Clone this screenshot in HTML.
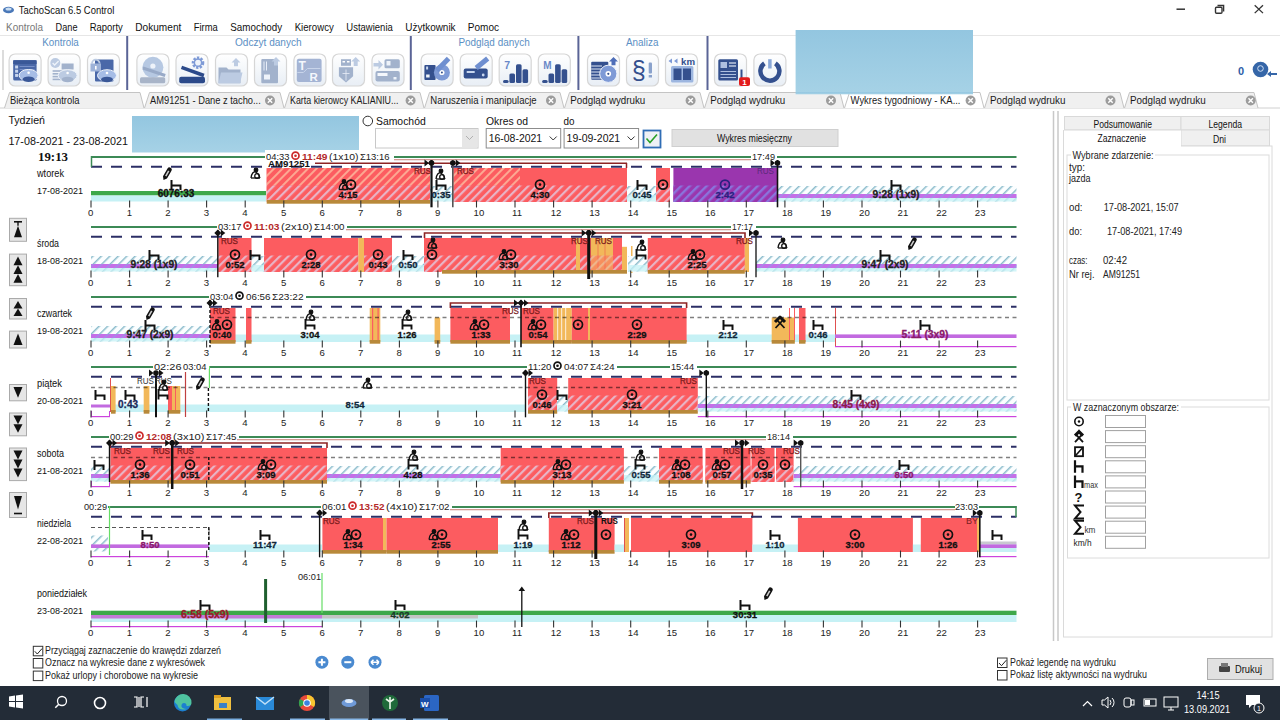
<!DOCTYPE html>
<html><head><meta charset="utf-8"><title>TachoScan</title>
<style>html,body{margin:0;padding:0;background:#fff;overflow:hidden} svg{display:block} text{font-family:"Liberation Sans",sans-serif}</style>
</head><body>
<svg width="1280" height="720" viewBox="0 0 1280 720">
<defs>
<pattern id="hpeach" patternUnits="userSpaceOnUse" width="6" height="6" patternTransform="rotate(45)">
  <rect width="6" height="6" fill="#fc5c60"/><rect x="0" width="2" height="6" fill="#fca892"/></pattern>
<pattern id="hgrey" patternUnits="userSpaceOnUse" width="6" height="6" patternTransform="rotate(45)">
  <rect width="6" height="6" fill="#fc5c60"/><rect x="0" width="2.2" height="6" fill="#e8b4c6"/></pattern>
<pattern id="hpurp" patternUnits="userSpaceOnUse" width="6" height="6" patternTransform="rotate(45)">
  <rect width="6" height="6" fill="#9a36ae"/><rect x="0" width="2.4" height="6" fill="#8a74dc"/></pattern>
<pattern id="hcyan" patternUnits="userSpaceOnUse" width="6" height="6" patternTransform="rotate(45)">
  <rect width="6" height="6" fill="#fbfeff"/><rect x="0" width="1.5" height="6" fill="#8cbccc"/></pattern>
<pattern id="hpbar" patternUnits="userSpaceOnUse" width="6" height="6" patternTransform="rotate(45)">
  <rect width="6" height="6" fill="#c66ee8"/><rect x="0" width="1.6" height="6" fill="#a58ae8"/></pattern>
<linearGradient id="bluerect" x1="0" y1="0" x2="0" y2="1"><stop offset="0" stop-color="#93c6e0"/><stop offset="1" stop-color="#a6d2e6"/></linearGradient>
<linearGradient id="btn" x1="0" y1="0" x2="0" y2="1"><stop offset="0" stop-color="#ffffff"/><stop offset="1" stop-color="#e8eef5"/></linearGradient>
</defs>
<ellipse cx="8.5" cy="10" rx="5.5" ry="3.2" fill="#4a78b8"/><ellipse cx="8.5" cy="9" rx="3" ry="1.5" fill="#c8dcf0"/>
<text x="18.8" y="13.8" font-size="11" fill="#111" textLength="95.5" lengthAdjust="spacingAndGlyphs" >TachoScan 6.5 Control</text>
<line x1="1176.5" y1="9.2" x2="1185.0" y2="9.2" stroke="#333" stroke-width="1.5" />
<rect x="1215.5" y="7.2" width="6.5" height="6.1" fill="none" stroke="#333" stroke-width="1.4" rx="1"/>
<path d="M1217.5 5.5 H1223.6 V11.5" fill="none" stroke="#333" stroke-width="1.4"/>
<line x1="1254.7" y1="5.3" x2="1263.0" y2="13.1" stroke="#333" stroke-width="1.3" />
<line x1="1263.0" y1="5.3" x2="1254.7" y2="13.1" stroke="#333" stroke-width="1.3" />
<text x="6.0" y="30.8" font-size="10.5" fill="#777" textLength="37.0" lengthAdjust="spacingAndGlyphs" >Kontrola</text>
<text x="55.6" y="30.8" font-size="10.5" fill="#111" textLength="21.9" lengthAdjust="spacingAndGlyphs" >Dane</text>
<text x="89.7" y="30.8" font-size="10.5" fill="#111" textLength="33.1" lengthAdjust="spacingAndGlyphs" >Raporty</text>
<text x="135.3" y="30.8" font-size="10.5" fill="#111" textLength="46.0" lengthAdjust="spacingAndGlyphs" >Dokument</text>
<text x="193.8" y="30.8" font-size="10.5" fill="#111" textLength="24.0" lengthAdjust="spacingAndGlyphs" >Firma</text>
<text x="230.3" y="30.8" font-size="10.5" fill="#111" textLength="51.9" lengthAdjust="spacingAndGlyphs" >Samochody</text>
<text x="294.7" y="30.8" font-size="10.5" fill="#111" textLength="39.1" lengthAdjust="spacingAndGlyphs" >Kierowcy</text>
<text x="346.3" y="30.8" font-size="10.5" fill="#111" textLength="46.5" lengthAdjust="spacingAndGlyphs" >Ustawienia</text>
<text x="405.3" y="30.8" font-size="10.5" fill="#111" textLength="50.3" lengthAdjust="spacingAndGlyphs" >Użytkownik</text>
<text x="467.8" y="30.8" font-size="10.5" fill="#111" textLength="31.2" lengthAdjust="spacingAndGlyphs" >Pomoc</text>
<line x1="0.0" y1="35.5" x2="1280.0" y2="35.5" stroke="#e6e6e6" stroke-width="1" />
<rect x="0.0" y="36.0" width="1280.0" height="56.0" fill="#ffffff" />
<text x="42.2" y="45.5" font-size="10.5" fill="#5b8fc4" textLength="36.6" lengthAdjust="spacingAndGlyphs" >Kontrola</text>
<text x="235.0" y="45.5" font-size="10.5" fill="#5b8fc4" textLength="66.6" lengthAdjust="spacingAndGlyphs" >Odczyt danych</text>
<text x="458.4" y="45.5" font-size="10.5" fill="#5b8fc4" textLength="71.3" lengthAdjust="spacingAndGlyphs" >Podgląd danych</text>
<text x="626.0" y="45.5" font-size="10.5" fill="#5b8fc4" textLength="32.4" lengthAdjust="spacingAndGlyphs" >Analiza</text>
<line x1="127.2" y1="36.0" x2="127.2" y2="90.0" stroke="#5a6496" stroke-width="2" />
<line x1="410.8" y1="36.0" x2="410.8" y2="90.0" stroke="#5a6496" stroke-width="2" />
<line x1="578.4" y1="36.0" x2="578.4" y2="90.0" stroke="#5a6496" stroke-width="2" />
<line x1="707.5" y1="36.0" x2="707.5" y2="90.0" stroke="#5a6496" stroke-width="2" />
<line x1="3.0" y1="50.0" x2="3.0" y2="90.0" stroke="#dcdcdc" stroke-width="2" />
<rect x="9.1" y="54.0" width="32" height="32" rx="6" fill="url(#btn)" stroke="#d6d6d6" stroke-width="1.2"/>
<rect x="13.2" y="60.2" width="23.4" height="20.3" fill="#4a68a8" rx="1.5"/>
<rect x="13.2" y="60.2" width="23.4" height="3.8" fill="#3a5898" />
<rect x="15.1" y="65.5" width="3.0" height="3.0" fill="#c8d6ee" />
<rect x="15.1" y="69.7" width="3.0" height="3.0" fill="#c8d6ee" />
<rect x="15.1" y="73.9" width="3.0" height="3.0" fill="#c8d6ee" />
<line x1="19.6" y1="66.5" x2="34.6" y2="66.5" stroke="#7890c8" stroke-width="1" />
<line x1="19.6" y1="69.5" x2="34.6" y2="69.5" stroke="#7890c8" stroke-width="1" />
<ellipse cx="28.6" cy="75.3" rx="9.5" ry="5.8" fill="#a6bde6" stroke="#eef3fa" stroke-width="1"/><ellipse cx="28.6" cy="79.3" rx="6" ry="2.8" fill="#3a5898"/><circle cx="28.6" cy="72.8" r="1.3" fill="#fff"/>
<rect x="48.1" y="54.0" width="32" height="32" rx="6" fill="url(#btn)" stroke="#d6d6d6" stroke-width="1.2"/>
<circle cx="55.300000000000004" cy="63.0" r="5" fill="#bccbe2"/><path d="M52.6 63.0 l2 2 l4 -4" stroke="#eef3fa" stroke-width="1.3" fill="none"/>
<rect x="61.6" y="63.5" width="12.0" height="6.0" fill="#a2b2cc" />
<line x1="52.6" y1="71.0" x2="63.6" y2="71.0" stroke="#a2b2cc" stroke-width="1.6" />
<line x1="52.6" y1="73.8" x2="63.6" y2="73.8" stroke="#a2b2cc" stroke-width="1.6" />
<line x1="52.6" y1="76.6" x2="63.6" y2="76.6" stroke="#a2b2cc" stroke-width="1.6" />
<line x1="52.6" y1="79.4" x2="63.6" y2="79.4" stroke="#a2b2cc" stroke-width="1.6" />
<ellipse cx="67.6" cy="75.5" rx="9.5" ry="5.8" fill="#bccbe2" stroke="#eef3fa" stroke-width="1"/><ellipse cx="67.6" cy="79.5" rx="6" ry="2.8" fill="#a2b2cc"/><circle cx="67.6" cy="73.0" r="1.3" fill="#fff"/>
<rect x="87.5" y="54.0" width="32" height="32" rx="6" fill="url(#btn)" stroke="#d6d6d6" stroke-width="1.2"/>
<rect x="95.0" y="59.5" width="18.5" height="22.0" fill="#4a68a8" rx="1"/>
<path d="M92 63.5 a3.8 3.8 0 0 1 7.6 0" fill="none" stroke="#bccbe2" stroke-width="1.8"/>
<rect x="90.5" y="63.5" width="10.5" height="8.0" fill="#9db2d8" />
<rect x="95.0" y="66.0" width="1.6" height="3.5" fill="#fff" />
<ellipse cx="107.0" cy="75.5" rx="9.5" ry="5.8" fill="#a6bde6" stroke="#eef3fa" stroke-width="1"/><ellipse cx="107.0" cy="79.5" rx="6" ry="2.8" fill="#3a5898"/><circle cx="107.0" cy="73.0" r="1.3" fill="#fff"/>
<rect x="136.9" y="54.0" width="32" height="32" rx="6" fill="url(#btn)" stroke="#d6d6d6" stroke-width="1.2"/>
<circle cx="152.9" cy="67.3" r="10.5" fill="#b6c8e2"/><circle cx="152.9" cy="66.0" r="2.6" fill="#eef3fa"/>
<line x1="142.9" y1="68.0" x2="165.2" y2="75.5" stroke="#98aac8" stroke-width="3" />
<rect x="140.0" y="77.3" width="25.2" height="5.9" fill="#a8b4c8" rx="1.5"/>
<rect x="176.0" y="54.0" width="32" height="32" rx="6" fill="url(#btn)" stroke="#d6d6d6" stroke-width="1.2"/>
<circle cx="198.0" cy="62.7" r="4.8" fill="#eef3fa" stroke="#7e9ad6" stroke-width="3" stroke-dasharray="2.2 1.3"/><circle cx="198.0" cy="62.7" r="3.6" fill="none" stroke="#7e9ad6" stroke-width="1.5"/>
<line x1="181.5" y1="67.3" x2="203.9" y2="75.5" stroke="#2c4a8a" stroke-width="3.5" />
<rect x="179.2" y="76.7" width="25.8" height="6.5" fill="#2c4a8a" rx="2"/>
<rect x="215.5" y="54.0" width="32" height="32" rx="6" fill="url(#btn)" stroke="#d6d6d6" stroke-width="1.2"/>
<path d="M231.5 62.5 L236.0 58.0 L240.5 62.5 H238.0 V66.2 H234.0 V62.5z" fill="#bccbe2"/>
<path d="M218.5 67.5 h8 l2 2 h12 v13.7 h-22z" fill="#a2b2cc"/><path d="M221 72.5 h21.5 l-2.5 10.7 h-21.5z" fill="#bccbe2"/>
<rect x="254.5" y="54.0" width="32" height="32" rx="6" fill="url(#btn)" stroke="#d6d6d6" stroke-width="1.2"/>
<rect x="261.3" y="59.1" width="16.7" height="24.1" fill="#a2b2cc" rx="1"/>
<line x1="264.0" y1="61.5" x2="264.0" y2="70.5" stroke="#e8eef8" stroke-width="1" />
<line x1="266.5" y1="61.5" x2="266.5" y2="70.5" stroke="#e8eef8" stroke-width="1" />
<rect x="264.0" y="74.5" width="6.0" height="5.0" fill="#eef3fa" />
<path d="M271.5 61.5 L276.0 57.0 L280.5 61.5 H278.0 V65.5 H274.0 V61.5z" fill="#bccbe2"/>
<rect x="293.9" y="54.0" width="32" height="32" rx="6" fill="url(#btn)" stroke="#d6d6d6" stroke-width="1.2"/>
<rect x="296.8" y="58.7" width="24.8" height="23.3" fill="#a4b4d4" rx="2"/>
<path d="M297.4 72.5 h6 l4 -4 h13" fill="none" stroke="#c8d4ea" stroke-width="1"/>
<text x="298.4" y="70.0" font-size="12" fill="#f4f7fc" font-weight="bold" >T</text>
<text x="309.4" y="80.5" font-size="11.5" fill="#f4f7fc" font-weight="bold" >R</text>
<rect x="332.5" y="54.0" width="32" height="32" rx="6" fill="url(#btn)" stroke="#d6d6d6" stroke-width="1.2"/>
<rect x="341.0" y="59.2" width="10.0" height="6.6" fill="#a2b2cc" />
<rect x="342.5" y="61.0" width="2.5" height="1.5" fill="#fff" />
<rect x="347.0" y="61.0" width="2.5" height="1.5" fill="#fff" />
<path d="M351.2 61.5 L355.7 57.0 L360.2 61.5 H357.7 V66.0 H353.7 V61.5z" fill="#bccbe2"/>
<path d="M338.9 67.3 h14.2 v9 l-7.1 6.2 l-7.1 -6.2z" fill="#a2b2cc"/><path d="M346 69.5 v11 M342.5 73.5 h7" stroke="#e8eef8" stroke-width="0.8"/>
<rect x="372.0" y="54.0" width="32" height="32" rx="6" fill="url(#btn)" stroke="#d6d6d6" stroke-width="1.2"/>
<path d="M373.5 63.0 h5 v-3 l4.5 4.8 l-4.5 4.8 v-3 h-5z" fill="#bccbe2"/>
<rect x="384.5" y="59.2" width="15.3" height="9.1" fill="#a2b2cc" rx="1.5"/>
<rect x="386.5" y="61.0" width="4.0" height="4.5" fill="#eef3fa" />
<rect x="375.5" y="70.9" width="24.3" height="10.6" fill="#a2b2cc" rx="2"/>
<rect x="377.5" y="73.0" width="10.0" height="3.0" fill="#f4f7fc" />
<rect x="393.5" y="77.0" width="3.0" height="2.5" fill="#eef3fa" />
<rect x="421.1" y="54.0" width="32" height="32" rx="6" fill="url(#btn)" stroke="#d6d6d6" stroke-width="1.2"/>
<rect x="424.4" y="64.9" width="11.2" height="15.0" fill="#34508e" rx="1"/>
<rect x="426.1" y="66.5" width="2.0" height="3.0" fill="#c8d6ee" />
<rect x="426.1" y="74.5" width="3.5" height="3.0" fill="#eef3fa" />
<circle cx="441.90000000000003" cy="72.5" r="8" fill="#7e9ad6"/><circle cx="441.90000000000003" cy="72.5" r="2.6" fill="#fff"/><circle cx="441.90000000000003" cy="72.5" r="1" fill="#34508e"/>
<line x1="436.9" y1="70.5" x2="448.6" y2="58.5" stroke="#6f8fd0" stroke-width="5" />
<rect x="460.2" y="54.0" width="32" height="32" rx="6" fill="url(#btn)" stroke="#d6d6d6" stroke-width="1.2"/>
<rect x="463.7" y="68.5" width="24.0" height="10.0" fill="#34508e" rx="2"/>
<rect x="466.7" y="71.0" width="8.0" height="2.0" fill="#c8d6ee" />
<circle cx="483.2" cy="75.0" r="1.4" fill="#c8d6ee"/>
<line x1="476.2" y1="68.0" x2="487.7" y2="58.5" stroke="#6f8fd0" stroke-width="5" />
<rect x="499.2" y="54.0" width="32" height="32" rx="6" fill="url(#btn)" stroke="#d6d6d6" stroke-width="1.2"/>
<text x="504.2" y="68.5" font-size="10.5" fill="#6a88c8" font-weight="bold" >7</text>
<rect x="503.0" y="79.9" width="5.6" height="3.1" fill="#34508e" rx="1.5"/>
<rect x="509.4" y="73.5" width="5.6" height="9.5" fill="#34508e" rx="1.5"/>
<rect x="516.0" y="64.3" width="5.6" height="18.7" fill="#34508e" rx="1.5"/>
<rect x="522.5" y="69.3" width="5.6" height="13.7" fill="#34508e" rx="1.5"/>
<rect x="538.3" y="54.0" width="32" height="32" rx="6" fill="url(#btn)" stroke="#d6d6d6" stroke-width="1.2"/>
<text x="543.3" y="68.5" font-size="10" fill="#6a88c8" font-weight="bold" >M</text>
<rect x="542.1" y="79.9" width="5.6" height="3.1" fill="#34508e" rx="1.5"/>
<rect x="548.5" y="73.5" width="5.6" height="9.5" fill="#34508e" rx="1.5"/>
<rect x="555.1" y="64.3" width="5.6" height="18.7" fill="#34508e" rx="1.5"/>
<rect x="561.6" y="69.3" width="5.6" height="13.7" fill="#34508e" rx="1.5"/>
<rect x="587.5" y="54.0" width="32" height="32" rx="6" fill="url(#btn)" stroke="#d6d6d6" stroke-width="1.2"/>
<rect x="591.2" y="61.7" width="17.1" height="18.1" fill="#34508e" rx="1"/>
<line x1="591.2" y1="66.0" x2="602.0" y2="66.0" stroke="#dfe7f4" stroke-width="1" />
<line x1="591.2" y1="69.0" x2="602.0" y2="69.0" stroke="#dfe7f4" stroke-width="1" />
<line x1="591.2" y1="72.0" x2="602.0" y2="72.0" stroke="#dfe7f4" stroke-width="1" />
<line x1="591.2" y1="75.0" x2="602.0" y2="75.0" stroke="#dfe7f4" stroke-width="1" />
<line x1="591.2" y1="78.0" x2="602.0" y2="78.0" stroke="#dfe7f4" stroke-width="1" />
<circle cx="608.3" cy="73.8" r="8.6" fill="#7e9ad6" stroke="#eef3fa" stroke-width="1"/><circle cx="608.3" cy="73.8" r="2.8" fill="#fff"/><circle cx="608.3" cy="73.8" r="1.1" fill="#34508e"/>
<path d="M609.0 61.5 L613.5 57.0 L618.0 61.5 H615.5 V65.2 H611.5 V61.5z" fill="#4e6eb8"/>
<rect x="626.5" y="54.0" width="32" height="32" rx="6" fill="url(#btn)" stroke="#d6d6d6" stroke-width="1.2"/>
<text x="631.8" y="79.3" font-size="25" fill="#34508e" textLength="14.0" lengthAdjust="spacingAndGlyphs" >§</text>
<rect x="648.7" y="62.5" width="3.3" height="11.0" fill="#8aa2cc" rx="1"/>
<rect x="648.7" y="75.0" width="3.3" height="2.5" fill="#8aa2cc" />
<rect x="665.5" y="54.0" width="32" height="32" rx="6" fill="url(#btn)" stroke="#d6d6d6" stroke-width="1.2"/>
<text x="681.0" y="64.7" font-size="9.5" fill="#34508e" font-weight="bold" textLength="14.0" lengthAdjust="spacingAndGlyphs" >km</text>
<path d="M668.5 60.9 l3.5 -2.5 v5z M674 60.9 l3.5 -2.5 v5z" fill="#7e9ad6"/>
<rect x="671.0" y="66.0" width="22.4" height="16.5" fill="#9db6e0" rx="1.5"/>
<rect x="673.5" y="68.5" width="8.0" height="11.5" fill="#34508e" />
<rect x="683.0" y="68.5" width="8.0" height="11.5" fill="#34508e" />
<rect x="714.5" y="54.0" width="32" height="32" rx="6" fill="url(#btn)" stroke="#d6d6d6" stroke-width="1.2"/>
<rect x="718.3" y="59.2" width="19.7" height="21.4" fill="#34508e" rx="1.5"/>
<rect x="720.5" y="62.0" width="6.5" height="6.0" fill="#aebfe0" />
<line x1="729.0" y1="63.0" x2="736.0" y2="63.0" stroke="#dfe7f4" stroke-width="1.2" />
<line x1="729.0" y1="66.0" x2="736.0" y2="66.0" stroke="#dfe7f4" stroke-width="1.2" />
<line x1="720.5" y1="71.5" x2="736.0" y2="71.5" stroke="#aebfe0" stroke-width="1" />
<line x1="720.5" y1="74.5" x2="736.0" y2="74.5" stroke="#aebfe0" stroke-width="1" />
<line x1="720.5" y1="77.5" x2="736.0" y2="77.5" stroke="#aebfe0" stroke-width="1" />
<rect x="740.5" y="69.5" width="2.0" height="10.5" fill="#34508e" />
<rect x="739.0" y="77.2" width="11.0" height="8.9" fill="#e21c1c" rx="2"/>
<text x="742.3" y="85.0" font-size="8" fill="#fff" font-weight="bold" >1</text>
<rect x="753.9" y="54.0" width="32" height="32" rx="6" fill="url(#btn)" stroke="#d6d6d6" stroke-width="1.2"/>
<path d="M764.4 63.4 A9.5 9.5 0 1 0 775.4 63.4" fill="none" stroke="#34508e" stroke-width="4.5"/>
<line x1="769.9" y1="59.2" x2="769.9" y2="68.5" stroke="#8aa8d8" stroke-width="3.5" />
<rect x="795.6" y="30.0" width="177.4" height="64.3" fill="url(#bluerect)" />
<text x="1238.0" y="74.5" font-size="11" fill="#2d5ea8" font-weight="bold" >0</text>
<circle cx="1260.5" cy="69.5" r="7.8" fill="#3566a8"/><circle cx="1260.5" cy="68.5" r="2.8" fill="none" stroke="#cfe0f4" stroke-width="1"/><path d="M1270 74 h7" stroke="#3566a8" stroke-width="2"/><path d="M1267 74 l4 -3 v6z" fill="#3566a8"/>
<rect x="0.0" y="92.0" width="1280.0" height="16.5" fill="#ffffff" />
<line x1="0.0" y1="108.0" x2="1280.0" y2="108.0" stroke="#d0d0d0" stroke-width="1" />
<path d="M4.5 108 L9.5 92.5 H140 L144 108" fill="#f0f0f0" stroke="#c4c4c4" stroke-width="1"/>
<path d="M144.5 108 L149.5 92.5 H280 L284 108" fill="#f0f0f0" stroke="#c4c4c4" stroke-width="1"/>
<path d="M284.5 108 L289.5 92.5 H420 L424 108" fill="#f0f0f0" stroke="#c4c4c4" stroke-width="1"/>
<path d="M424.5 108 L429.5 92.5 H560 L564 108" fill="#f0f0f0" stroke="#c4c4c4" stroke-width="1"/>
<path d="M564.5 108 L569.5 92.5 H700 L704 108" fill="#f0f0f0" stroke="#c4c4c4" stroke-width="1"/>
<path d="M704.5 108 L709.5 92.5 H840 L844 108" fill="#f0f0f0" stroke="#c4c4c4" stroke-width="1"/>
<path d="M844.5 108 L849.5 92.5 H980 L984 108" fill="#ffffff" stroke="#c4c4c4" stroke-width="1"/>
<path d="M984.5 108 L989.5 92.5 H1120 L1124 108" fill="#f0f0f0" stroke="#c4c4c4" stroke-width="1"/>
<path d="M1124.5 108 L1129.5 92.5 H1254 L1258 108" fill="#f0f0f0" stroke="#c4c4c4" stroke-width="1"/>
<text x="10.0" y="104.0" font-size="10.5" fill="#1a1a1a" textLength="69.5" lengthAdjust="spacingAndGlyphs" >Bieżąca kontrola</text>
<text x="150.0" y="104.0" font-size="10.5" fill="#1a1a1a" textLength="110.8" lengthAdjust="spacingAndGlyphs" >AM91251 - Dane z tacho...</text>
<circle cx="270" cy="100.5" r="5" fill="#9c9c9c"/><path d="M267.8 98.3 l4.4 4.4 M272.2 98.3 l-4.4 4.4" stroke="#fff" stroke-width="1.4"/>
<text x="290.0" y="104.0" font-size="10.5" fill="#1a1a1a" textLength="108.4" lengthAdjust="spacingAndGlyphs" >Karta kierowcy KALIANIU...</text>
<circle cx="410.6" cy="100.5" r="5" fill="#9c9c9c"/><path d="M408.40000000000003 98.3 l4.4 4.4 M412.8 98.3 l-4.4 4.4" stroke="#fff" stroke-width="1.4"/>
<text x="430.3" y="104.0" font-size="10.5" fill="#1a1a1a" textLength="106.3" lengthAdjust="spacingAndGlyphs" >Naruszenia i manipulacje</text>
<circle cx="551" cy="100.5" r="5" fill="#9c9c9c"/><path d="M548.8 98.3 l4.4 4.4 M553.2 98.3 l-4.4 4.4" stroke="#fff" stroke-width="1.4"/>
<text x="570.3" y="104.0" font-size="10.5" fill="#1a1a1a" textLength="75.0" lengthAdjust="spacingAndGlyphs" >Podgląd wydruku</text>
<circle cx="690.6" cy="100.5" r="5" fill="#9c9c9c"/><path d="M688.4 98.3 l4.4 4.4 M692.8000000000001 98.3 l-4.4 4.4" stroke="#fff" stroke-width="1.4"/>
<text x="710.3" y="104.0" font-size="10.5" fill="#1a1a1a" textLength="75.0" lengthAdjust="spacingAndGlyphs" >Podgląd wydruku</text>
<circle cx="831" cy="100.5" r="5" fill="#9c9c9c"/><path d="M828.8 98.3 l4.4 4.4 M833.2 98.3 l-4.4 4.4" stroke="#fff" stroke-width="1.4"/>
<text x="850.6" y="104.0" font-size="10.5" fill="#1a1a1a" textLength="109.9" lengthAdjust="spacingAndGlyphs" >Wykres tygodniowy - KA...</text>
<circle cx="970.6" cy="100.5" r="5" fill="#9c9c9c"/><path d="M968.4 98.3 l4.4 4.4 M972.8000000000001 98.3 l-4.4 4.4" stroke="#fff" stroke-width="1.4"/>
<text x="990.0" y="104.0" font-size="10.5" fill="#1a1a1a" textLength="75.5" lengthAdjust="spacingAndGlyphs" >Podgląd wydruku</text>
<circle cx="1110.5" cy="100.5" r="5" fill="#9c9c9c"/><path d="M1108.3 98.3 l4.4 4.4 M1112.7 98.3 l-4.4 4.4" stroke="#fff" stroke-width="1.4"/>
<text x="1130.0" y="104.0" font-size="10.5" fill="#1a1a1a" textLength="75.7" lengthAdjust="spacingAndGlyphs" >Podgląd wydruku</text>
<circle cx="1250.7" cy="100.5" r="5" fill="#9c9c9c"/><path d="M1248.5 98.3 l4.4 4.4 M1252.9 98.3 l-4.4 4.4" stroke="#fff" stroke-width="1.4"/>
<rect x="795.6" y="92.0" width="177.4" height="2.3" fill="url(#bluerect)" />
<text x="8.4" y="124.3" font-size="10.8" fill="#111" textLength="36.6" lengthAdjust="spacingAndGlyphs" >Tydzień</text>
<text x="8.4" y="144.5" font-size="10.8" fill="#111" textLength="119.6" lengthAdjust="spacingAndGlyphs" >17-08-2021 - 23-08-2021</text>
<rect x="132.0" y="116.0" width="227.0" height="36.5" fill="url(#bluerect)" />
<circle cx="367.8" cy="121" r="4.8" fill="#fff" stroke="#333" stroke-width="1"/>
<text x="376.0" y="125.0" font-size="10.8" fill="#111" textLength="49.7" lengthAdjust="spacingAndGlyphs" >Samochód</text>
<rect x="375.5" y="128.5" width="102.5" height="19.5" fill="#fff" stroke="#c8c8c8" stroke-width="1"/>
<rect x="462.0" y="129.0" width="15.5" height="18.5" fill="#e6e6e6" />
<path d="M466 136 l3.5 3.5 l3.5 -3.5" fill="none" stroke="#b0b0b0" stroke-width="1"/>
<text x="486.0" y="125.0" font-size="10.8" fill="#111" textLength="42.0" lengthAdjust="spacingAndGlyphs" >Okres od</text>
<text x="563.6" y="125.0" font-size="10.8" fill="#111" textLength="11.0" lengthAdjust="spacingAndGlyphs" >do</text>
<rect x="486.2" y="128.5" width="74.5" height="19.5" fill="#fff" stroke="#8c8c8c" stroke-width="1"/>
<text x="488.7" y="142.3" font-size="10.8" fill="#111" textLength="53.5" lengthAdjust="spacingAndGlyphs" >16-08-2021</text>
<path d="M549.7 136.5 l3.5 3.5 l3.5 -3.5" fill="none" stroke="#333" stroke-width="1"/>
<rect x="564.1" y="128.5" width="74.5" height="19.5" fill="#fff" stroke="#8c8c8c" stroke-width="1"/>
<text x="566.6" y="142.3" font-size="10.8" fill="#111" textLength="53.5" lengthAdjust="spacingAndGlyphs" >19-09-2021</text>
<path d="M627.6 136.5 l3.5 3.5 l3.5 -3.5" fill="none" stroke="#333" stroke-width="1"/>
<rect x="643.5" y="130.5" width="17.0" height="17.0" fill="#eef1f5" stroke="#2f6db5" stroke-width="1.8"/>
<path d="M646.5 138.5 l3.5 4 l7 -8" fill="none" stroke="#28a028" stroke-width="1.6"/>
<rect x="672.0" y="129.5" width="166.0" height="17.0" fill="#e1e1e1" stroke="#cfcfcf" stroke-width="1"/>
<text x="717.0" y="141.5" font-size="10.5" fill="#111" textLength="75.0" lengthAdjust="spacingAndGlyphs" >Wykres miesięczny</text>
<line x1="1053.5" y1="111.0" x2="1053.5" y2="641.0" stroke="#c8c8c8" stroke-width="1.5" />
<line x1="1058.0" y1="111.0" x2="1058.0" y2="641.0" stroke="#c8c8c8" stroke-width="1.5" />
<rect x="1064.5" y="116.5" width="116.5" height="13.5" fill="#f0f0f0" stroke="#d9d9d9" stroke-width="1"/>
<rect x="1181.0" y="116.5" width="88.5" height="13.5" fill="#f0f0f0" stroke="#d9d9d9" stroke-width="1"/>
<rect x="1181.0" y="130.0" width="88.5" height="16.0" fill="#f0f0f0" stroke="#d9d9d9" stroke-width="1"/>
<rect x="1063.5" y="146.0" width="208.5" height="491.0" fill="#ffffff" stroke="#dadada" stroke-width="1"/>
<rect x="1064.0" y="130.0" width="117.0" height="17.0" fill="#ffffff" />
<line x1="1063.5" y1="130.0" x2="1063.5" y2="146.0" stroke="#dadada" stroke-width="1" />
<line x1="1064.0" y1="130.0" x2="1181.0" y2="130.0" stroke="#dadada" stroke-width="1" />
<text x="1093.5" y="127.5" font-size="10" fill="#111" textLength="58.5" lengthAdjust="spacingAndGlyphs" >Podsumowanie</text>
<text x="1208.5" y="127.5" font-size="10" fill="#111" textLength="33.5" lengthAdjust="spacingAndGlyphs" >Legenda</text>
<text x="1097.5" y="141.5" font-size="10" fill="#111" textLength="48.5" lengthAdjust="spacingAndGlyphs" >Zaznaczenie</text>
<text x="1213.0" y="143.0" font-size="10" fill="#111" textLength="13.0" lengthAdjust="spacingAndGlyphs" >Dni</text>
<rect x="1067.0" y="155.0" width="202.0" height="245.0" fill="none" stroke="#dcdcdc" stroke-width="1"/>
<rect x="1071.0" y="150.0" width="84.0" height="8.0" fill="#fff" />
<text x="1072.5" y="158.5" font-size="10" fill="#222" textLength="81.0" lengthAdjust="spacingAndGlyphs" >Wybrane zdarzenie:</text>
<text x="1069.0" y="170.5" font-size="10" fill="#222" textLength="16.0" lengthAdjust="spacingAndGlyphs" >typ:</text>
<text x="1069.0" y="181.5" font-size="10" fill="#222" textLength="21.5" lengthAdjust="spacingAndGlyphs" >jazda</text>
<text x="1069.0" y="210.5" font-size="10" fill="#222" textLength="13.5" lengthAdjust="spacingAndGlyphs" >od:</text>
<text x="1069.0" y="235.0" font-size="10" fill="#222" textLength="13.0" lengthAdjust="spacingAndGlyphs" >do:</text>
<text x="1069.0" y="263.5" font-size="10" fill="#222" textLength="18.5" lengthAdjust="spacingAndGlyphs" >czas:</text>
<text x="1069.0" y="278.4" font-size="10" fill="#222" textLength="25.5" lengthAdjust="spacingAndGlyphs" >Nr rej.</text>
<text x="1103.7" y="210.5" font-size="10" fill="#222" textLength="75.0" lengthAdjust="spacingAndGlyphs" >17-08-2021, 15:07</text>
<text x="1107.0" y="235.0" font-size="10" fill="#222" textLength="75.0" lengthAdjust="spacingAndGlyphs" >17-08-2021, 17:49</text>
<text x="1103.0" y="263.5" font-size="10" fill="#222" textLength="24.0" lengthAdjust="spacingAndGlyphs" >02:42</text>
<text x="1103.0" y="278.4" font-size="10" fill="#222" textLength="37.0" lengthAdjust="spacingAndGlyphs" >AM91251</text>
<rect x="1067.5" y="407.0" width="201.5" height="151.0" fill="none" stroke="#dcdcdc" stroke-width="1"/>
<rect x="1071.0" y="403.0" width="110.0" height="7.0" fill="#fff" />
<text x="1073.0" y="410.8" font-size="10" fill="#222" textLength="106.0" lengthAdjust="spacingAndGlyphs" >W zaznaczonym obszarze:</text>
<rect x="1105.5" y="415.5" width="40.0" height="12.0" fill="#fff" stroke="#a0a0a0" stroke-width="1"/>
<rect x="1105.5" y="430.6" width="40.0" height="12.0" fill="#fff" stroke="#a0a0a0" stroke-width="1"/>
<rect x="1105.5" y="445.7" width="40.0" height="12.0" fill="#fff" stroke="#a0a0a0" stroke-width="1"/>
<rect x="1105.5" y="460.8" width="40.0" height="12.0" fill="#fff" stroke="#a0a0a0" stroke-width="1"/>
<rect x="1105.5" y="475.9" width="40.0" height="12.0" fill="#fff" stroke="#a0a0a0" stroke-width="1"/>
<rect x="1105.5" y="491.0" width="40.0" height="12.0" fill="#fff" stroke="#a0a0a0" stroke-width="1"/>
<rect x="1105.5" y="506.1" width="40.0" height="12.0" fill="#fff" stroke="#a0a0a0" stroke-width="1"/>
<rect x="1105.5" y="521.2" width="40.0" height="12.0" fill="#fff" stroke="#a0a0a0" stroke-width="1"/>
<rect x="1105.5" y="536.3" width="40.0" height="12.0" fill="#fff" stroke="#a0a0a0" stroke-width="1"/>
<circle cx="1079" cy="421.5" r="4.2" fill="none" stroke="#111" stroke-width="1.6"/><circle cx="1079" cy="421.5" r="1.2" fill="#111"/>
<path d="M1075 442.1 L1082 434.6 M1083 442.1 L1076 434.6" stroke="#111" stroke-width="1.8"/><path d="M1075 435.6 l5 -5 M1083 435.6 l-5 -5" stroke="#111" stroke-width="3"/>
<rect x="1075.0" y="447.2" width="8.0" height="9.0" fill="none" stroke="#111" stroke-width="1.8"/>
<line x1="1075.0" y1="456.2" x2="1083.0" y2="447.2" stroke="#111" stroke-width="1.6" />
<path d="M1075 460.3 V472.8 M1075 466.3 H1082.5 V472.8" fill="none" stroke="#111" stroke-width="2.2"/>
<path d="M1075 475.4 V487.9 M1075 481.4 H1082.5 V487.9" fill="none" stroke="#111" stroke-width="2.2"/>
<text x="1084.0" y="487.9" font-size="8.5" fill="#333" textLength="14.0" lengthAdjust="spacingAndGlyphs" >max</text>
<text x="1074.5" y="502.0" font-size="13" fill="#111" font-weight="bold" >?</text>
<path d="M1084 505.6 H1075 L1080.5 512.1 L1075 518.6 H1084" fill="none" stroke="#111" stroke-width="2"/>
<path d="M1084 520.7 H1075 L1080.5 527.2 L1075 533.7 H1084" fill="none" stroke="#111" stroke-width="2"/>
<text x="1084.5" y="533.2" font-size="8.5" fill="#333" textLength="11.0" lengthAdjust="spacingAndGlyphs" >km</text>
<text x="1073.5" y="546.3" font-size="8.5" fill="#222" textLength="18.0" lengthAdjust="spacingAndGlyphs" >km/h</text>
<rect x="33.3" y="646.3" width="9.5" height="9.5" fill="#fff" stroke="#333" stroke-width="1"/>
<path d="M34.8 651.3 l2.5 2.7 l4.8 -5.5" fill="none" stroke="#222" stroke-width="1"/>
<text x="45.0" y="653.8" font-size="10" fill="#222" textLength="176.0" lengthAdjust="spacingAndGlyphs" >Przyciągaj zaznaczenie do krawędzi zdarzeń</text>
<rect x="33.3" y="658.5" width="9.5" height="9.5" fill="#fff" stroke="#333" stroke-width="1"/>
<text x="45.0" y="666.2" font-size="10" fill="#222" textLength="160.0" lengthAdjust="spacingAndGlyphs" >Oznacz na wykresie dane z wykresówek</text>
<rect x="33.3" y="671.1" width="9.5" height="9.5" fill="#fff" stroke="#333" stroke-width="1"/>
<text x="45.0" y="678.5" font-size="10" fill="#222" textLength="153.0" lengthAdjust="spacingAndGlyphs" >Pokaż urlopy i chorobowe na wykresie</text>
<circle cx="321.9" cy="662.2" r="6.5" fill="#4a8ad0"/>
<path d="M318.4 662.2 h7 M321.9 658.7 v7" stroke="#fff" stroke-width="2"/>
<circle cx="347.8" cy="662.2" r="6.5" fill="#4a8ad0"/>
<path d="M344.3 662.2 h7" stroke="#fff" stroke-width="2"/>
<circle cx="375" cy="662.2" r="6.5" fill="#4a8ad0"/>
<path d="M371 662.2 h8 M371 662.2 l2.5 -2.5 M371 662.2 l2.5 2.5 M379 662.2 l-2.5 -2.5 M379 662.2 l-2.5 2.5" stroke="#fff" stroke-width="1.6"/>
<rect x="997.5" y="658.0" width="9.5" height="9.5" fill="#fff" stroke="#333" stroke-width="1"/>
<path d="M999 663.0 l2.5 2.7 l4.8 -5.5" fill="none" stroke="#222" stroke-width="1"/>
<text x="1010.0" y="666.0" font-size="10" fill="#222" textLength="106.0" lengthAdjust="spacingAndGlyphs" >Pokaż legendę na wydruku</text>
<rect x="997.5" y="670.5" width="9.5" height="9.5" fill="#fff" stroke="#333" stroke-width="1"/>
<text x="1010.0" y="678.3" font-size="10" fill="#222" textLength="137.0" lengthAdjust="spacingAndGlyphs" >Pokaż listę aktywności na wydruku</text>
<rect x="1207.5" y="658.5" width="65.5" height="21.0" fill="#e1e1e1" stroke="#adadad" stroke-width="1"/>
<rect x="1219" y="666" width="11" height="6" rx="1" fill="#444"/><rect x="1221" y="663" width="7" height="4" fill="#777"/>
<text x="1235.0" y="673.0" font-size="10" fill="#111" textLength="27.0" lengthAdjust="spacingAndGlyphs" >Drukuj</text>
<rect x="0.0" y="686.0" width="1280.0" height="34.0" fill="#232c37" />
<rect x="329.0" y="686.0" width="40.0" height="34.0" fill="#4a535d" />
<path d="M9 696.5 l6 -0.9 v5.4 h-6z M16 695.4 l7 -1 v6.6 h-7z M9 702 h6 v5.4 l-6 -0.9z M16 702 h7 v6.6 l-7 -1z" fill="#fff"/>
<circle cx="62" cy="701" r="4.5" fill="none" stroke="#fff" stroke-width="1.3"/><path d="M58.8 704.2 l-3.5 3.5" stroke="#fff" stroke-width="1.5"/>
<circle cx="100" cy="703" r="5.5" fill="none" stroke="#fff" stroke-width="1.6"/>
<path d="M134 697 h3 v10 h-3 M144 697 h-3 v10 h3 M139 697 v10 M147 697 v10" fill="none" stroke="#fff" stroke-width="1.2"/>
<circle cx="182.5" cy="703" r="8.5" fill="#1c7fd0"/><path d="M174.5 702 a8.5 8.5 0 0 1 17 1 q0 3 -4 3 h-6 q1 3 5 3 q-8 2 -9 -4z" fill="#4fc3a0"/><circle cx="184" cy="705.5" r="2.5" fill="#1c7fd0"/>
<rect x="214" y="697" width="17" height="13" fill="#f0c040"/><rect x="214" y="695" width="7" height="3" fill="#e0a020"/><rect x="219" y="703" width="8" height="5" fill="#3a80c8"/>
<rect x="256" y="697" width="18" height="13" fill="#2a8ad8"/><path d="M256 697 l9 7 l9 -7" fill="none" stroke="#bfe0f8" stroke-width="1.4"/>
<circle cx="307" cy="703" r="8" fill="#e84a3a"/><path d="M307 695 a8 8 0 0 1 7 12 l-7 -4z" fill="#f8c630"/><path d="M300 707 a8 8 0 0 1 0 -8 l7 4z" fill="#2da44e"/><circle cx="307" cy="703" r="3.8" fill="#fff"/><circle cx="307" cy="703" r="2.8" fill="#3b82e0"/>
<ellipse cx="349" cy="703" rx="7.5" ry="4" fill="#6f9ad8"/><ellipse cx="349" cy="701" rx="4" ry="2" fill="#dbe8f8"/>
<circle cx="390" cy="703" r="8" fill="#1f6a3a"/><path d="M390 697 v12 M386 699 l4 3 l4 -3" stroke="#e8f4e8" stroke-width="1.6" fill="none"/>
<rect x="424" y="695" width="15" height="16" rx="1.5" fill="#2b66c4"/><rect x="420" y="698" width="10" height="10" fill="#1a4ea8"/><text x="421" y="706.5" font-size="8" font-weight="bold" fill="#fff">W</text>
<rect x="207.0" y="718.5" width="35.0" height="1.5" fill="#7aaee0" />
<rect x="290.0" y="718.5" width="35.0" height="1.5" fill="#88b8e8" />
<rect x="330.0" y="718.5" width="38.0" height="1.5" fill="#88b8e8" />
<rect x="372.0" y="718.5" width="34.0" height="1.5" fill="#88b8e8" />
<rect x="413.0" y="718.5" width="35.0" height="1.5" fill="#88b8e8" />
<path d="M1083 706 l4.5 -4.5 l4.5 4.5" fill="none" stroke="#fff" stroke-width="1.2"/>
<path d="M1102 700 h2.5 l3.5 -3 v11 l-3.5 -3 h-2.5z" fill="none" stroke="#fff" stroke-width="1"/><path d="M1110 700 a4 4 0 0 1 0 5 M1112 698 a6 6 0 0 1 0 9" fill="none" stroke="#fff" stroke-width="1"/>
<rect x="1124" y="698" width="7" height="9" rx="2" fill="none" stroke="#fff" stroke-width="1"/><rect x="1131" y="700" width="3" height="5" fill="none" stroke="#fff" stroke-width="1"/>
<rect x="1144" y="699" width="12" height="7" fill="none" stroke="#fff" stroke-width="1"/><rect x="1145" y="700" width="5" height="5" fill="#fff"/>
<rect x="1164" y="697" width="14" height="10" fill="none" stroke="#fff" stroke-width="1"/><path d="M1168 710 h6 M1171 707 v3" stroke="#fff" stroke-width="1"/>
<text x="1208.0" y="699.0" font-size="10" fill="#fff" text-anchor="middle" textLength="23.0" lengthAdjust="spacingAndGlyphs" >14:15</text>
<text x="1207.0" y="713.0" font-size="10" fill="#fff" text-anchor="middle" textLength="46.0" lengthAdjust="spacingAndGlyphs" >13.09.2021</text>
<path d="M1246 695 h14 v10 h-8 l-3 3 v-3 h-3z" fill="#fff"/><circle cx="1259" cy="708" r="5" fill="#232c37" stroke="#fff" stroke-width="1"/><text x="1257" y="711" font-size="7" fill="#fff">1</text>
<rect x="91.0" y="156.0" width="175.0" height="2.0" fill="#3c8a56" />
<rect x="394.0" y="156.0" width="357.0" height="2.0" fill="#3c8a56" />
<rect x="777.0" y="156.0" width="239.5" height="2.0" fill="#3c8a56" />
<rect x="394.0" y="159.0" width="357.0" height="1.3" fill="#d49a94" />
<line x1="91" y1="166.8" x2="1016.5" y2="166.8" stroke="#2c2f66" stroke-width="2" stroke-dasharray="11 9"/>
<line x1="91.5" y1="156.0" x2="91.5" y2="167.0" stroke="#3c8a56" stroke-width="1.5" />
<rect x="315.0" y="162.5" width="312.0" height="1.5" fill="#8e2424" />
<line x1="626.5" y1="163.0" x2="626.5" y2="168.0" stroke="#8e2424" stroke-width="1.5" />
<rect x="91.0" y="191.0" width="175.0" height="4.5" fill="#3ea84a" />
<rect x="91.0" y="195.5" width="175.0" height="6.0" fill="#c6f1f5" />
<rect x="266.7" y="168.0" width="163.3" height="34.0" fill="#fc5c60" />
<rect x="266.7" y="168.0" width="163.3" height="17.5" fill="url(#hpeach)" />
<rect x="266.7" y="185.5" width="163.3" height="14.5" fill="url(#hgrey)" />
<rect x="266.7" y="200.0" width="163.3" height="3.7" fill="#b8893a" />
<rect x="430.0" y="186.0" width="23.5" height="15.5" fill="url(#hcyan)" />
<rect x="430.0" y="195.0" width="23.5" height="6.5" fill="#c6f1f5" opacity="0.75"/>
<rect x="453.5" y="168.0" width="173.5" height="34.0" fill="#fc5c60" />
<rect x="453.5" y="168.0" width="66.5" height="17.5" fill="url(#hpeach)" />
<rect x="453.5" y="185.5" width="173.5" height="16.5" fill="url(#hgrey)" />
<rect x="627.0" y="186.0" width="29.0" height="15.5" fill="url(#hcyan)" />
<rect x="627.0" y="195.0" width="29.0" height="6.5" fill="#c6f1f5" opacity="0.75"/>
<rect x="656.0" y="168.0" width="14.0" height="34.0" fill="#fc5c60" />
<rect x="656.0" y="185.5" width="14.0" height="16.5" fill="url(#hgrey)" />
<rect x="673.4" y="168.0" width="104.1" height="34.0" fill="#9a36ae" />
<rect x="673.4" y="185.5" width="104.1" height="16.5" fill="url(#hpurp)" />
<rect x="777.5" y="186.0" width="239.0" height="15.5" fill="url(#hcyan)" />
<rect x="777.5" y="195.0" width="239.0" height="6.5" fill="#c6f1f5" opacity="0.75"/>
<rect x="777.5" y="194.0" width="239.0" height="4.0" fill="url(#hpbar)" />
<line x1="91.0" y1="200.6" x2="91.0" y2="207.5" stroke="#333" stroke-width="1.1" />
<text x="88.1" y="215.8" font-size="9.6" fill="#222" >0</text>
<line x1="129.6" y1="200.6" x2="129.6" y2="207.5" stroke="#333" stroke-width="1.1" />
<text x="126.7" y="215.8" font-size="9.6" fill="#222" >1</text>
<line x1="168.1" y1="200.6" x2="168.1" y2="207.5" stroke="#333" stroke-width="1.1" />
<text x="165.2" y="215.8" font-size="9.6" fill="#222" >2</text>
<line x1="206.6" y1="200.6" x2="206.6" y2="207.5" stroke="#333" stroke-width="1.1" />
<text x="203.7" y="215.8" font-size="9.6" fill="#222" >3</text>
<line x1="245.2" y1="200.6" x2="245.2" y2="207.5" stroke="#333" stroke-width="1.1" />
<text x="242.3" y="215.8" font-size="9.6" fill="#222" >4</text>
<line x1="283.8" y1="200.6" x2="283.8" y2="207.5" stroke="#333" stroke-width="1.1" />
<text x="280.9" y="215.8" font-size="9.6" fill="#222" >5</text>
<line x1="322.3" y1="200.6" x2="322.3" y2="207.5" stroke="#333" stroke-width="1.1" />
<text x="319.4" y="215.8" font-size="9.6" fill="#222" >6</text>
<line x1="360.8" y1="200.6" x2="360.8" y2="207.5" stroke="#333" stroke-width="1.1" />
<text x="357.9" y="215.8" font-size="9.6" fill="#222" >7</text>
<line x1="399.4" y1="200.6" x2="399.4" y2="207.5" stroke="#333" stroke-width="1.1" />
<text x="396.5" y="215.8" font-size="9.6" fill="#222" >8</text>
<line x1="437.9" y1="200.6" x2="437.9" y2="207.5" stroke="#333" stroke-width="1.1" />
<text x="435.1" y="215.8" font-size="9.6" fill="#222" >9</text>
<line x1="476.5" y1="200.6" x2="476.5" y2="207.5" stroke="#333" stroke-width="1.1" />
<text x="473.6" y="215.8" font-size="9.6" fill="#222" >10</text>
<line x1="515.0" y1="200.6" x2="515.0" y2="207.5" stroke="#333" stroke-width="1.1" />
<text x="512.1" y="215.8" font-size="9.6" fill="#222" >11</text>
<line x1="553.6" y1="200.6" x2="553.6" y2="207.5" stroke="#333" stroke-width="1.1" />
<text x="550.7" y="215.8" font-size="9.6" fill="#222" >12</text>
<line x1="592.1" y1="200.6" x2="592.1" y2="207.5" stroke="#333" stroke-width="1.1" />
<text x="589.2" y="215.8" font-size="9.6" fill="#222" >13</text>
<line x1="630.7" y1="200.6" x2="630.7" y2="207.5" stroke="#333" stroke-width="1.1" />
<text x="627.8" y="215.8" font-size="9.6" fill="#222" >14</text>
<line x1="669.2" y1="200.6" x2="669.2" y2="207.5" stroke="#333" stroke-width="1.1" />
<text x="666.4" y="215.8" font-size="9.6" fill="#222" >15</text>
<line x1="707.8" y1="200.6" x2="707.8" y2="207.5" stroke="#333" stroke-width="1.1" />
<text x="704.9" y="215.8" font-size="9.6" fill="#222" >16</text>
<line x1="746.3" y1="200.6" x2="746.3" y2="207.5" stroke="#333" stroke-width="1.1" />
<text x="743.4" y="215.8" font-size="9.6" fill="#222" >17</text>
<line x1="784.9" y1="200.6" x2="784.9" y2="207.5" stroke="#333" stroke-width="1.1" />
<text x="782.0" y="215.8" font-size="9.6" fill="#222" >18</text>
<line x1="823.4" y1="200.6" x2="823.4" y2="207.5" stroke="#333" stroke-width="1.1" />
<text x="820.5" y="215.8" font-size="9.6" fill="#222" >19</text>
<line x1="862.0" y1="200.6" x2="862.0" y2="207.5" stroke="#333" stroke-width="1.1" />
<text x="859.1" y="215.8" font-size="9.6" fill="#222" >20</text>
<line x1="900.5" y1="200.6" x2="900.5" y2="207.5" stroke="#333" stroke-width="1.1" />
<text x="897.6" y="215.8" font-size="9.6" fill="#222" >21</text>
<line x1="939.1" y1="200.6" x2="939.1" y2="207.5" stroke="#333" stroke-width="1.1" />
<text x="936.2" y="215.8" font-size="9.6" fill="#222" >22</text>
<line x1="977.6" y1="200.6" x2="977.6" y2="207.5" stroke="#333" stroke-width="1.1" />
<text x="974.8" y="215.8" font-size="9.6" fill="#222" >23</text>
<line x1="431.5" y1="160.0" x2="431.5" y2="207.3" stroke="#111" stroke-width="2.2" />
<path d="M424.5 159.5 l4.5 3.5 l-4.5 3.5z" fill="#111"/>
<circle cx="431.5" cy="163.0" r="2.8" fill="#111"/>
<line x1="452.8" y1="160.0" x2="452.8" y2="207.3" stroke="#555" stroke-width="1.6" />
<path d="M455.8 159.5 l4.5 3.5 l-4.5 3.5z" fill="#111"/>
<circle cx="452.8" cy="163.0" r="2.8" fill="#111"/>
<line x1="777.5" y1="160.0" x2="777.5" y2="207.3" stroke="#111" stroke-width="1.6" />
<path d="M770.5 159.5 l4.5 3.5 l-4.5 3.5z" fill="#111"/>
<circle cx="777.5" cy="163.0" r="2.8" fill="#111"/>
<rect x="265.0" y="150.0" width="127.0" height="9.0" fill="#fff" />
<text x="266.0" y="159.5" font-size="9.2" fill="#222" textLength="23.5" lengthAdjust="spacingAndGlyphs" >04:33</text>
<circle cx="295.5" cy="155.7" r="3.5" fill="none" stroke="#cc2a2a" stroke-width="1.7"/><circle cx="295.5" cy="155.7" r="1.3" fill="#cc2a2a"/>
<text x="302.0" y="159.5" font-size="9.5" fill="#b42a2a" font-weight="bold" textLength="25.5" lengthAdjust="spacingAndGlyphs" >11:49</text>
<text x="329.0" y="159.5" font-size="9.2" fill="#222" textLength="29.5" lengthAdjust="spacingAndGlyphs" >(1x10)</text>
<text x="360.0" y="159.5" font-size="9.2" fill="#222" textLength="29.5" lengthAdjust="spacingAndGlyphs" >Σ13:16</text>
<text x="268.0" y="166.5" font-size="8.5" fill="#111" font-weight="bold" textLength="42.0" lengthAdjust="spacingAndGlyphs" >AM91251</text>
<rect x="751.0" y="150.0" width="26.0" height="9.0" fill="#fff" />
<text x="752.0" y="159.5" font-size="9.2" fill="#222" textLength="23.0" lengthAdjust="spacingAndGlyphs" >17:49</text>
<text x="414.0" y="173.5" font-size="9" fill="#7a1a1a" textLength="17.0" lengthAdjust="spacingAndGlyphs" stroke="#7a1a1a" stroke-width="0.25">RUS</text>
<text x="457.0" y="173.5" font-size="9" fill="#7a1a1a" textLength="17.0" lengthAdjust="spacingAndGlyphs" stroke="#7a1a1a" stroke-width="0.25">RUS</text>
<text x="757.0" y="173.5" font-size="9" fill="#5a2a7a" textLength="17.0" lengthAdjust="spacingAndGlyphs" >RUS</text>
<g transform="translate(167.0,174.0) rotate(-60)"><path d="M-7 0 l3 -2.3 h9 a1.5 1.5 0 0 1 0 4.6 h-9z" fill="#111"/><rect x="-2.5" y="-0.8" width="6" height="1.6" fill="#ccc"/></g>
<g fill="none" stroke="#111" stroke-width="1.3"><circle cx="256.0" cy="170.0" r="1.8" fill="#111"/><path d="M251.0 178.0 Q252.0 171.0 256.0 172.0 Q259.0 174.0 260.0 178.0"/><circle cx="257.0" cy="176.0" r="2.3"/><path d="M251.0 178.0 H260.0"/></g>
<path d="M171.5 180.0 V190.0 M171.5 185.5 H180.5 V190.0" fill="none" stroke="#111" stroke-width="2"/>
<text x="176.0" y="197.4" font-size="10" fill="#111" font-weight="bold" text-anchor="middle" textLength="36.7" lengthAdjust="spacingAndGlyphs" stroke="#111" stroke-width="0.3">6076:33</text>
<g fill="none" stroke="#111" stroke-width="1.3"><circle cx="344.0" cy="181.5" r="1.8" fill="#111"/><path d="M339.0 189.5 Q340.0 182.5 344.0 183.5 Q347.0 185.5 348.0 189.5"/><circle cx="345.0" cy="187.5" r="2.3"/><path d="M339.0 189.5 H348.0"/></g>
<circle cx="351.0" cy="184.6" r="4.5" fill="none" stroke="#111" stroke-width="1.7"/><circle cx="351.0" cy="184.6" r="1.3" fill="#111"/>
<text x="348.0" y="198.4" font-size="9.5" fill="#111" font-weight="bold" text-anchor="middle" stroke="#111" stroke-width="0.3">4:15</text>
<g fill="none" stroke="#111" stroke-width="1.3"><circle cx="441.0" cy="171.0" r="1.8" fill="#111"/><path d="M436.0 179.0 Q437.0 172.0 441.0 173.0 Q444.0 175.0 445.0 179.0"/><circle cx="442.0" cy="177.0" r="2.3"/><path d="M436.0 179.0 H445.0"/></g>
<path d="M436.5 180.0 V190.0 M436.5 185.5 H445.5 V190.0" fill="none" stroke="#111" stroke-width="2"/>
<text x="441.0" y="198.4" font-size="9.5" fill="#10283a" font-weight="bold" text-anchor="middle" stroke="#10283a" stroke-width="0.3">0:35</text>
<circle cx="540.0" cy="184.6" r="4.5" fill="none" stroke="#111" stroke-width="1.7"/><circle cx="540.0" cy="184.6" r="1.3" fill="#111"/>
<text x="540.0" y="198.4" font-size="9.5" fill="#111" font-weight="bold" text-anchor="middle" stroke="#111" stroke-width="0.3">4:30</text>
<path d="M637.5 180.0 V190.0 M637.5 185.5 H646.5 V190.0" fill="none" stroke="#111" stroke-width="2"/>
<text x="642.0" y="198.4" font-size="9.5" fill="#10283a" font-weight="bold" text-anchor="middle" stroke="#10283a" stroke-width="0.3">0:45</text>
<circle cx="663.0" cy="184.6" r="4.5" fill="none" stroke="#111" stroke-width="1.7"/><circle cx="663.0" cy="184.6" r="1.3" fill="#111"/>
<circle cx="725.0" cy="184.6" r="4.5" fill="none" stroke="#2a2080" stroke-width="1.7"/><circle cx="725.0" cy="184.6" r="1.3" fill="#2a2080"/>
<text x="725.0" y="198.4" font-size="9.5" fill="#2a2080" font-weight="bold" text-anchor="middle" stroke="#2a2080" stroke-width="0.3">2:42</text>
<path d="M891.5 180.0 V190.0 M891.5 185.5 H900.5 V190.0" fill="none" stroke="#111" stroke-width="2"/>
<text x="896.0" y="197.9" font-size="10" fill="#222" font-weight="bold" text-anchor="middle" textLength="47.0" lengthAdjust="spacingAndGlyphs" stroke="#222" stroke-width="0.3">9:28 (1x9)</text>
<text x="37.0" y="176.5" font-size="10" fill="#111" textLength="27.0" lengthAdjust="spacingAndGlyphs" >wtorek</text>
<text x="37.0" y="194.2" font-size="9.4" fill="#111" textLength="46.0" lengthAdjust="spacingAndGlyphs" >17-08-2021</text>
<text x="38.0" y="161.0" font-size="12.5" fill="#111" font-weight="bold" textLength="30.0" lengthAdjust="spacingAndGlyphs" style="font-family:'Liberation Serif'" >19:13</text>
<rect x="91.0" y="226.0" width="127.0" height="2.0" fill="#3c8a56" />
<rect x="346.0" y="226.0" width="385.0" height="2.0" fill="#3c8a56" />
<rect x="756.0" y="226.0" width="260.5" height="2.0" fill="#3c8a56" />
<rect x="346.0" y="229.0" width="385.0" height="1.3" fill="#d49a94" />
<path d="M424.5 238.0 V233.0 H745.0 V238.0" fill="none" stroke="#8e2424" stroke-width="1.6"/>
<line x1="91" y1="236.8" x2="1016.5" y2="236.8" stroke="#2c2f66" stroke-width="2" stroke-dasharray="11 9"/>
<rect x="91.0" y="256.0" width="127.0" height="15.5" fill="url(#hcyan)" />
<rect x="91.0" y="265.0" width="127.0" height="6.5" fill="#c6f1f5" opacity="0.75"/>
<rect x="91.0" y="264.0" width="127.0" height="4.0" fill="url(#hpbar)" />
<rect x="218.4" y="238.0" width="33.1" height="34.0" fill="#fc5c60" />
<rect x="218.4" y="255.5" width="33.1" height="16.5" fill="url(#hgrey)" />
<rect x="251.5" y="256.0" width="12.5" height="15.5" fill="url(#hcyan)" />
<rect x="251.5" y="265.0" width="12.5" height="6.5" fill="#c6f1f5" opacity="0.75"/>
<rect x="264.0" y="238.0" width="94.4" height="34.0" fill="#fc5c60" />
<rect x="264.0" y="255.5" width="94.4" height="16.5" fill="url(#hgrey)" />
<rect x="358.4" y="238.0" width="5.6" height="34.0" fill="#f2b85a" />
<rect x="364.0" y="238.0" width="28.0" height="34.0" fill="#fc5c60" />
<rect x="364.0" y="255.5" width="28.0" height="16.5" fill="url(#hgrey)" />
<rect x="392.0" y="256.0" width="32.0" height="15.5" fill="url(#hcyan)" />
<rect x="392.0" y="265.0" width="32.0" height="6.5" fill="#c6f1f5" opacity="0.75"/>
<rect x="424.0" y="238.0" width="152.0" height="34.0" fill="#fc5c60" />
<rect x="424.0" y="255.5" width="152.0" height="16.5" fill="url(#hgrey)" />
<rect x="442.0" y="270.0" width="134.0" height="3.7" fill="#b8893a" />
<rect x="576.0" y="238.0" width="4.0" height="34.0" fill="#f2b85a" />
<rect x="576.0" y="270.0" width="4.0" height="3.7" fill="#b8893a" />
<rect x="580.0" y="238.0" width="11.0" height="34.0" fill="#fc5c60" />
<rect x="580.0" y="255.5" width="11.0" height="14.5" fill="url(#hgrey)" />
<rect x="580.0" y="270.0" width="11.0" height="3.7" fill="#b8893a" />
<rect x="591.0" y="238.0" width="22.0" height="34.0" fill="#f2b85a" />
<rect x="591.0" y="270.0" width="22.0" height="3.7" fill="#b8893a" />
<rect x="597.5" y="238.0" width="1.0" height="32.0" fill="#f08050" />
<rect x="604.5" y="238.0" width="1.0" height="32.0" fill="#f08050" />
<rect x="591.0" y="255.5" width="22.0" height="14.5" fill="url(#hgrey)" opacity="0.45"/>
<rect x="613.0" y="238.0" width="9.0" height="34.0" fill="#fc5c60" />
<rect x="613.0" y="255.5" width="9.0" height="14.5" fill="url(#hgrey)" />
<rect x="613.0" y="270.0" width="9.0" height="3.7" fill="#b8893a" />
<rect x="622.0" y="246.8" width="5.0" height="25.2" fill="#f2b85a" />
<rect x="622.0" y="270.0" width="5.0" height="3.7" fill="#b8893a" />
<rect x="631.0" y="246.0" width="1.5" height="27.0" fill="#f2b85a" />
<rect x="628.0" y="256.0" width="20.0" height="15.5" fill="url(#hcyan)" />
<rect x="628.0" y="265.0" width="20.0" height="6.5" fill="#c6f1f5" opacity="0.75"/>
<rect x="647.8" y="238.0" width="97.0" height="34.0" fill="#fc5c60" />
<rect x="647.8" y="255.5" width="97.0" height="14.5" fill="url(#hgrey)" />
<rect x="647.8" y="270.0" width="97.0" height="3.7" fill="#b8893a" />
<rect x="744.8" y="238.0" width="4.2" height="34.0" fill="#f2b85a" />
<rect x="756.0" y="256.0" width="260.5" height="15.5" fill="url(#hcyan)" />
<rect x="756.0" y="265.0" width="260.5" height="6.5" fill="#c6f1f5" opacity="0.75"/>
<rect x="756.0" y="264.0" width="260.5" height="4.0" fill="url(#hpbar)" />
<line x1="91.0" y1="270.6" x2="91.0" y2="277.5" stroke="#333" stroke-width="1.1" />
<text x="88.1" y="285.8" font-size="9.6" fill="#222" >0</text>
<line x1="129.6" y1="270.6" x2="129.6" y2="277.5" stroke="#333" stroke-width="1.1" />
<text x="126.7" y="285.8" font-size="9.6" fill="#222" >1</text>
<line x1="168.1" y1="270.6" x2="168.1" y2="277.5" stroke="#333" stroke-width="1.1" />
<text x="165.2" y="285.8" font-size="9.6" fill="#222" >2</text>
<line x1="206.6" y1="270.6" x2="206.6" y2="277.5" stroke="#333" stroke-width="1.1" />
<text x="203.7" y="285.8" font-size="9.6" fill="#222" >3</text>
<line x1="245.2" y1="270.6" x2="245.2" y2="277.5" stroke="#333" stroke-width="1.1" />
<text x="242.3" y="285.8" font-size="9.6" fill="#222" >4</text>
<line x1="283.8" y1="270.6" x2="283.8" y2="277.5" stroke="#333" stroke-width="1.1" />
<text x="280.9" y="285.8" font-size="9.6" fill="#222" >5</text>
<line x1="322.3" y1="270.6" x2="322.3" y2="277.5" stroke="#333" stroke-width="1.1" />
<text x="319.4" y="285.8" font-size="9.6" fill="#222" >6</text>
<line x1="360.8" y1="270.6" x2="360.8" y2="277.5" stroke="#333" stroke-width="1.1" />
<text x="357.9" y="285.8" font-size="9.6" fill="#222" >7</text>
<line x1="399.4" y1="270.6" x2="399.4" y2="277.5" stroke="#333" stroke-width="1.1" />
<text x="396.5" y="285.8" font-size="9.6" fill="#222" >8</text>
<line x1="437.9" y1="270.6" x2="437.9" y2="277.5" stroke="#333" stroke-width="1.1" />
<text x="435.1" y="285.8" font-size="9.6" fill="#222" >9</text>
<line x1="476.5" y1="270.6" x2="476.5" y2="277.5" stroke="#333" stroke-width="1.1" />
<text x="473.6" y="285.8" font-size="9.6" fill="#222" >10</text>
<line x1="515.0" y1="270.6" x2="515.0" y2="277.5" stroke="#333" stroke-width="1.1" />
<text x="512.1" y="285.8" font-size="9.6" fill="#222" >11</text>
<line x1="553.6" y1="270.6" x2="553.6" y2="277.5" stroke="#333" stroke-width="1.1" />
<text x="550.7" y="285.8" font-size="9.6" fill="#222" >12</text>
<line x1="592.1" y1="270.6" x2="592.1" y2="277.5" stroke="#333" stroke-width="1.1" />
<text x="589.2" y="285.8" font-size="9.6" fill="#222" >13</text>
<line x1="630.7" y1="270.6" x2="630.7" y2="277.5" stroke="#333" stroke-width="1.1" />
<text x="627.8" y="285.8" font-size="9.6" fill="#222" >14</text>
<line x1="669.2" y1="270.6" x2="669.2" y2="277.5" stroke="#333" stroke-width="1.1" />
<text x="666.4" y="285.8" font-size="9.6" fill="#222" >15</text>
<line x1="707.8" y1="270.6" x2="707.8" y2="277.5" stroke="#333" stroke-width="1.1" />
<text x="704.9" y="285.8" font-size="9.6" fill="#222" >16</text>
<line x1="746.3" y1="270.6" x2="746.3" y2="277.5" stroke="#333" stroke-width="1.1" />
<text x="743.4" y="285.8" font-size="9.6" fill="#222" >17</text>
<line x1="784.9" y1="270.6" x2="784.9" y2="277.5" stroke="#333" stroke-width="1.1" />
<text x="782.0" y="285.8" font-size="9.6" fill="#222" >18</text>
<line x1="823.4" y1="270.6" x2="823.4" y2="277.5" stroke="#333" stroke-width="1.1" />
<text x="820.5" y="285.8" font-size="9.6" fill="#222" >19</text>
<line x1="862.0" y1="270.6" x2="862.0" y2="277.5" stroke="#333" stroke-width="1.1" />
<text x="859.1" y="285.8" font-size="9.6" fill="#222" >20</text>
<line x1="900.5" y1="270.6" x2="900.5" y2="277.5" stroke="#333" stroke-width="1.1" />
<text x="897.6" y="285.8" font-size="9.6" fill="#222" >21</text>
<line x1="939.1" y1="270.6" x2="939.1" y2="277.5" stroke="#333" stroke-width="1.1" />
<text x="936.2" y="285.8" font-size="9.6" fill="#222" >22</text>
<line x1="977.6" y1="270.6" x2="977.6" y2="277.5" stroke="#333" stroke-width="1.1" />
<text x="974.8" y="285.8" font-size="9.6" fill="#222" >23</text>
<line x1="217.8" y1="230.0" x2="217.8" y2="277.3" stroke="#111" stroke-width="1.4" />
<path d="M220.8 229.5 l4.5 3.5 l-4.5 3.5z" fill="#111"/>
<path d="M217.8 229.5 l3.5 3.5 l-3.5 3.5 l-3.5 -3.5z" fill="#111"/>
<line x1="588.7" y1="230.0" x2="588.7" y2="279.0" stroke="#111" stroke-width="3" />
<path d="M581.7 229.5 l4.5 3.5 l-4.5 3.5z" fill="#111"/>
<path d="M591.7 229.5 l4.5 3.5 l-4.5 3.5z" fill="#111"/>
<circle cx="588.7" cy="233.0" r="2.8" fill="#111"/>
<line x1="756.0" y1="230.0" x2="756.0" y2="277.3" stroke="#222" stroke-width="1.4" />
<path d="M749.0 229.5 l4.5 3.5 l-4.5 3.5z" fill="#111"/>
<circle cx="756.0" cy="233.0" r="2.8" fill="#111"/>
<rect x="217.0" y="220.0" width="130.0" height="9.0" fill="#fff" />
<text x="218.0" y="229.5" font-size="9.2" fill="#222" textLength="23.5" lengthAdjust="spacingAndGlyphs" >03:17</text>
<circle cx="247.5" cy="225.7" r="3.5" fill="none" stroke="#cc2a2a" stroke-width="1.7"/><circle cx="247.5" cy="225.7" r="1.3" fill="#cc2a2a"/>
<text x="254.0" y="229.5" font-size="9.5" fill="#b42a2a" font-weight="bold" textLength="25.5" lengthAdjust="spacingAndGlyphs" >11:03</text>
<text x="281.0" y="229.5" font-size="9.2" fill="#222" textLength="31.5" lengthAdjust="spacingAndGlyphs" >(2x10)</text>
<text x="314.0" y="229.5" font-size="9.2" fill="#222" textLength="30.5" lengthAdjust="spacingAndGlyphs" >Σ14:00</text>
<rect x="731.0" y="220.0" width="25.0" height="9.0" fill="#fff" />
<text x="732.0" y="229.5" font-size="9.2" fill="#222" textLength="21.0" lengthAdjust="spacingAndGlyphs" >17:17</text>
<text x="221.0" y="243.5" font-size="9" fill="#7a1a1a" textLength="17.0" lengthAdjust="spacingAndGlyphs" stroke="#7a1a1a" stroke-width="0.25">RUS</text>
<text x="571.0" y="243.5" font-size="9" fill="#7a1a1a" textLength="17.0" lengthAdjust="spacingAndGlyphs" stroke="#7a1a1a" stroke-width="0.25">RUS</text>
<text x="595.0" y="243.5" font-size="9" fill="#7a1a1a" textLength="17.0" lengthAdjust="spacingAndGlyphs" stroke="#7a1a1a" stroke-width="0.25">RUS</text>
<text x="736.0" y="243.5" font-size="9" fill="#7a1a1a" textLength="17.0" lengthAdjust="spacingAndGlyphs" stroke="#7a1a1a" stroke-width="0.25">RUS</text>
<path d="M149.5 250.0 V260.0 M149.5 255.5 H158.5 V260.0" fill="none" stroke="#111" stroke-width="2"/>
<text x="154.0" y="267.9" font-size="10" fill="#222" font-weight="bold" text-anchor="middle" textLength="47.0" lengthAdjust="spacingAndGlyphs" stroke="#222" stroke-width="0.3">9:28 (1x9)</text>
<circle cx="235.0" cy="254.6" r="4.5" fill="none" stroke="#111" stroke-width="1.7"/><circle cx="235.0" cy="254.6" r="1.3" fill="#111"/>
<text x="235.0" y="268.4" font-size="9.5" fill="#111" font-weight="bold" text-anchor="middle" stroke="#111" stroke-width="0.3">0:52</text>
<path d="M250.5 250.0 V260.0 M250.5 255.5 H259.5 V260.0" fill="none" stroke="#111" stroke-width="2"/>
<circle cx="311.0" cy="254.6" r="4.5" fill="none" stroke="#111" stroke-width="1.7"/><circle cx="311.0" cy="254.6" r="1.3" fill="#111"/>
<text x="311.0" y="268.4" font-size="9.5" fill="#111" font-weight="bold" text-anchor="middle" stroke="#111" stroke-width="0.3">2:28</text>
<circle cx="378.0" cy="254.6" r="4.5" fill="none" stroke="#111" stroke-width="1.7"/><circle cx="378.0" cy="254.6" r="1.3" fill="#111"/>
<text x="378.0" y="268.4" font-size="9.5" fill="#111" font-weight="bold" text-anchor="middle" stroke="#111" stroke-width="0.3">0:43</text>
<path d="M403.5 250.0 V260.0 M403.5 255.5 H412.5 V260.0" fill="none" stroke="#111" stroke-width="2"/>
<text x="408.0" y="268.4" font-size="9.5" fill="#10283a" font-weight="bold" text-anchor="middle" stroke="#10283a" stroke-width="0.3">0:50</text>
<g fill="none" stroke="#111" stroke-width="1.3"><circle cx="433.0" cy="240.0" r="1.8" fill="#111"/><path d="M428.0 248.0 Q429.0 241.0 433.0 242.0 Q436.0 244.0 437.0 248.0"/><circle cx="434.0" cy="246.0" r="2.3"/><path d="M428.0 248.0 H437.0"/></g>
<circle cx="432.0" cy="254.6" r="4.5" fill="none" stroke="#111" stroke-width="1.7"/><circle cx="432.0" cy="254.6" r="1.3" fill="#111"/>
<g fill="none" stroke="#111" stroke-width="1.3"><circle cx="504.0" cy="251.5" r="1.8" fill="#111"/><path d="M499.0 259.5 Q500.0 252.5 504.0 253.5 Q507.0 255.5 508.0 259.5"/><circle cx="505.0" cy="257.5" r="2.3"/><path d="M499.0 259.5 H508.0"/></g>
<circle cx="511.0" cy="254.6" r="4.5" fill="none" stroke="#111" stroke-width="1.7"/><circle cx="511.0" cy="254.6" r="1.3" fill="#111"/>
<text x="509.0" y="268.4" font-size="9.5" fill="#111" font-weight="bold" text-anchor="middle" stroke="#111" stroke-width="0.3">3:30</text>
<g fill="none" stroke="#111" stroke-width="1.3"><circle cx="642.0" cy="242.0" r="1.8" fill="#111"/><path d="M637.0 250.0 Q638.0 243.0 642.0 244.0 Q645.0 246.0 646.0 250.0"/><circle cx="643.0" cy="248.0" r="2.3"/><path d="M637.0 250.0 H646.0"/></g>
<path d="M636.5 249.0 V259.5 M636.5 255.5 H645.5 V259.5" fill="none" stroke="#111" stroke-width="1.9"/>
<g fill="none" stroke="#111" stroke-width="1.3"><circle cx="693.0" cy="251.5" r="1.8" fill="#111"/><path d="M688.0 259.5 Q689.0 252.5 693.0 253.5 Q696.0 255.5 697.0 259.5"/><circle cx="694.0" cy="257.5" r="2.3"/><path d="M688.0 259.5 H697.0"/></g>
<circle cx="700.0" cy="254.6" r="4.5" fill="none" stroke="#111" stroke-width="1.7"/><circle cx="700.0" cy="254.6" r="1.3" fill="#111"/>
<text x="697.0" y="268.4" font-size="9.5" fill="#111" font-weight="bold" text-anchor="middle" stroke="#111" stroke-width="0.3">2:25</text>
<g fill="none" stroke="#111" stroke-width="1.3"><circle cx="783.0" cy="240.0" r="1.8" fill="#111"/><path d="M778.0 248.0 Q779.0 241.0 783.0 242.0 Q786.0 244.0 787.0 248.0"/><circle cx="784.0" cy="246.0" r="2.3"/><path d="M778.0 248.0 H787.0"/></g>
<g transform="translate(912.0,244.0) rotate(-60)"><path d="M-7 0 l3 -2.3 h9 a1.5 1.5 0 0 1 0 4.6 h-9z" fill="#111"/><rect x="-2.5" y="-0.8" width="6" height="1.6" fill="#ccc"/></g>
<path d="M880.5 250.0 V260.0 M880.5 255.5 H889.5 V260.0" fill="none" stroke="#111" stroke-width="2"/>
<text x="885.0" y="267.9" font-size="10" fill="#222" font-weight="bold" text-anchor="middle" textLength="47.0" lengthAdjust="spacingAndGlyphs" stroke="#222" stroke-width="0.3">9:47 (2x9)</text>
<text x="37.0" y="246.5" font-size="10" fill="#111" textLength="22.0" lengthAdjust="spacingAndGlyphs" >środa</text>
<text x="37.0" y="264.2" font-size="9.4" fill="#111" textLength="46.0" lengthAdjust="spacingAndGlyphs" >18-08-2021</text>
<rect x="91.0" y="296.0" width="119.0" height="2.0" fill="#3c8a56" />
<rect x="303.0" y="296.0" width="713.5" height="2.0" fill="#3c8a56" />
<path d="M450.4 308.0 V303.0 H686.6 V308.0" fill="none" stroke="#8e2424" stroke-width="1.6"/>
<line x1="91" y1="306.8" x2="1016.5" y2="306.8" stroke="#2c2f66" stroke-width="2" stroke-dasharray="11 9"/>
<rect x="91.0" y="326.0" width="119.0" height="15.5" fill="url(#hcyan)" />
<rect x="91.0" y="335.0" width="119.0" height="6.5" fill="#c6f1f5" opacity="0.75"/>
<rect x="91.0" y="334.0" width="119.0" height="4.0" fill="url(#hpbar)" />
<rect x="210.0" y="334.5" width="625.0" height="7.5" fill="#c6f1f5" />
<rect x="210.0" y="308.0" width="25.5" height="34.0" fill="#fc5c60" />
<rect x="210.0" y="340.0" width="25.5" height="3.7" fill="#b8893a" />
<rect x="246.0" y="308.0" width="5.5" height="34.0" fill="#fc5c60" />
<rect x="246.0" y="340.0" width="5.5" height="3.7" fill="#b8893a" />
<rect x="369.7" y="308.0" width="10.6" height="34.0" fill="#f2b85a" />
<rect x="369.7" y="340.0" width="10.6" height="3.7" fill="#b8893a" />
<rect x="372.0" y="308.0" width="1.2" height="32.0" fill="#fc5c60" />
<rect x="377.5" y="308.0" width="1.2" height="32.0" fill="#fc5c60" />
<rect x="434.6" y="317.5" width="5.6" height="24.5" fill="#f2b85a" />
<rect x="434.6" y="340.0" width="5.6" height="3.7" fill="#b8893a" />
<rect x="450.4" y="308.0" width="59.6" height="34.0" fill="#fc5c60" />
<rect x="450.4" y="340.0" width="59.6" height="3.7" fill="#b8893a" />
<rect x="521.0" y="308.0" width="32.6" height="34.0" fill="#fc5c60" />
<rect x="521.0" y="340.0" width="32.6" height="3.7" fill="#b8893a" />
<rect x="553.6" y="308.0" width="18.2" height="34.0" fill="#f2b85a" />
<rect x="553.6" y="340.0" width="18.2" height="3.7" fill="#b8893a" />
<rect x="557.0" y="308.0" width="1.2" height="32.0" fill="#fbe6c8" />
<rect x="561.0" y="308.0" width="1.2" height="32.0" fill="#fbe6c8" />
<rect x="565.0" y="308.0" width="1.2" height="32.0" fill="#fbe6c8" />
<rect x="571.8" y="308.0" width="16.2" height="34.0" fill="#fc5c60" />
<rect x="571.8" y="340.0" width="16.2" height="3.7" fill="#b8893a" />
<rect x="588.0" y="308.0" width="2.0" height="34.0" fill="#f2b85a" />
<rect x="588.0" y="340.0" width="2.0" height="3.7" fill="#b8893a" />
<rect x="590.0" y="308.0" width="96.6" height="34.0" fill="#fc5c60" />
<rect x="590.0" y="340.0" width="96.6" height="3.7" fill="#b8893a" />
<rect x="771.7" y="317.5" width="23.1" height="24.5" fill="#f2b85a" />
<rect x="771.7" y="340.0" width="23.1" height="3.7" fill="#b8893a" />
<rect x="789.0" y="308.0" width="1.0" height="32.0" fill="#fc5c60" />
<rect x="794.0" y="308.0" width="1.0" height="32.0" fill="#fc5c60" />
<rect x="799.0" y="308.0" width="6.5" height="34.0" fill="#fc5c60" />
<rect x="799.0" y="340.0" width="6.5" height="3.7" fill="#b8893a" />
<line x1="835.5" y1="308.0" x2="835.5" y2="346.0" stroke="#e05050" stroke-width="1" />
<rect x="835.0" y="334.4" width="181.5" height="3.6" fill="#c26ae0" />
<rect x="835.0" y="346.0" width="181.5" height="1.2" fill="#cc44dd" />
<line x1="210.0" y1="317.5" x2="1016.5" y2="317.5" stroke="#000" stroke-opacity="0.5" stroke-width="1.5" stroke-dasharray="4 3.5"/>
<line x1="91.0" y1="340.6" x2="91.0" y2="347.5" stroke="#333" stroke-width="1.1" />
<text x="88.1" y="355.8" font-size="9.6" fill="#222" >0</text>
<line x1="129.6" y1="340.6" x2="129.6" y2="347.5" stroke="#333" stroke-width="1.1" />
<text x="126.7" y="355.8" font-size="9.6" fill="#222" >1</text>
<line x1="168.1" y1="340.6" x2="168.1" y2="347.5" stroke="#333" stroke-width="1.1" />
<text x="165.2" y="355.8" font-size="9.6" fill="#222" >2</text>
<line x1="206.6" y1="340.6" x2="206.6" y2="347.5" stroke="#333" stroke-width="1.1" />
<text x="203.7" y="355.8" font-size="9.6" fill="#222" >3</text>
<line x1="245.2" y1="340.6" x2="245.2" y2="347.5" stroke="#333" stroke-width="1.1" />
<text x="242.3" y="355.8" font-size="9.6" fill="#222" >4</text>
<line x1="283.8" y1="340.6" x2="283.8" y2="347.5" stroke="#333" stroke-width="1.1" />
<text x="280.9" y="355.8" font-size="9.6" fill="#222" >5</text>
<line x1="322.3" y1="340.6" x2="322.3" y2="347.5" stroke="#333" stroke-width="1.1" />
<text x="319.4" y="355.8" font-size="9.6" fill="#222" >6</text>
<line x1="360.8" y1="340.6" x2="360.8" y2="347.5" stroke="#333" stroke-width="1.1" />
<text x="357.9" y="355.8" font-size="9.6" fill="#222" >7</text>
<line x1="399.4" y1="340.6" x2="399.4" y2="347.5" stroke="#333" stroke-width="1.1" />
<text x="396.5" y="355.8" font-size="9.6" fill="#222" >8</text>
<line x1="437.9" y1="340.6" x2="437.9" y2="347.5" stroke="#333" stroke-width="1.1" />
<text x="435.1" y="355.8" font-size="9.6" fill="#222" >9</text>
<line x1="476.5" y1="340.6" x2="476.5" y2="347.5" stroke="#333" stroke-width="1.1" />
<text x="473.6" y="355.8" font-size="9.6" fill="#222" >10</text>
<line x1="515.0" y1="340.6" x2="515.0" y2="347.5" stroke="#333" stroke-width="1.1" />
<text x="512.1" y="355.8" font-size="9.6" fill="#222" >11</text>
<line x1="553.6" y1="340.6" x2="553.6" y2="347.5" stroke="#333" stroke-width="1.1" />
<text x="550.7" y="355.8" font-size="9.6" fill="#222" >12</text>
<line x1="592.1" y1="340.6" x2="592.1" y2="347.5" stroke="#333" stroke-width="1.1" />
<text x="589.2" y="355.8" font-size="9.6" fill="#222" >13</text>
<line x1="630.7" y1="340.6" x2="630.7" y2="347.5" stroke="#333" stroke-width="1.1" />
<text x="627.8" y="355.8" font-size="9.6" fill="#222" >14</text>
<line x1="669.2" y1="340.6" x2="669.2" y2="347.5" stroke="#333" stroke-width="1.1" />
<text x="666.4" y="355.8" font-size="9.6" fill="#222" >15</text>
<line x1="707.8" y1="340.6" x2="707.8" y2="347.5" stroke="#333" stroke-width="1.1" />
<text x="704.9" y="355.8" font-size="9.6" fill="#222" >16</text>
<line x1="746.3" y1="340.6" x2="746.3" y2="347.5" stroke="#333" stroke-width="1.1" />
<text x="743.4" y="355.8" font-size="9.6" fill="#222" >17</text>
<line x1="784.9" y1="340.6" x2="784.9" y2="347.5" stroke="#333" stroke-width="1.1" />
<text x="782.0" y="355.8" font-size="9.6" fill="#222" >18</text>
<line x1="823.4" y1="340.6" x2="823.4" y2="347.5" stroke="#333" stroke-width="1.1" />
<text x="820.5" y="355.8" font-size="9.6" fill="#222" >19</text>
<line x1="862.0" y1="340.6" x2="862.0" y2="347.5" stroke="#333" stroke-width="1.1" />
<text x="859.1" y="355.8" font-size="9.6" fill="#222" >20</text>
<line x1="900.5" y1="340.6" x2="900.5" y2="347.5" stroke="#333" stroke-width="1.1" />
<text x="897.6" y="355.8" font-size="9.6" fill="#222" >21</text>
<line x1="939.1" y1="340.6" x2="939.1" y2="347.5" stroke="#333" stroke-width="1.1" />
<text x="936.2" y="355.8" font-size="9.6" fill="#222" >22</text>
<line x1="977.6" y1="340.6" x2="977.6" y2="347.5" stroke="#333" stroke-width="1.1" />
<text x="974.8" y="355.8" font-size="9.6" fill="#222" >23</text>
<line x1="210.0" y1="300.0" x2="210.0" y2="347.3" stroke="#111" stroke-width="1.4" stroke-dasharray="3 2"/>
<path d="M213.0 299.5 l4.5 3.5 l-4.5 3.5z" fill="#111"/>
<path d="M210.0 299.5 l3.5 3.5 l-3.5 3.5 l-3.5 -3.5z" fill="#111"/>
<line x1="521.0" y1="300.0" x2="521.0" y2="347.3" stroke="#111" stroke-width="1.6" />
<path d="M514.0 299.5 l4.5 3.5 l-4.5 3.5z" fill="#111"/>
<path d="M524.0 299.5 l4.5 3.5 l-4.5 3.5z" fill="#111"/>
<path d="M521.0 299.5 l3.5 3.5 l-3.5 3.5 l-3.5 -3.5z" fill="#111"/>
<rect x="209.0" y="290.0" width="97.0" height="9.0" fill="#fff" />
<text x="210.0" y="299.5" font-size="9.2" fill="#222" textLength="23.5" lengthAdjust="spacingAndGlyphs" >03:04</text>
<circle cx="239.5" cy="295.7" r="3.5" fill="none" stroke="#111" stroke-width="1.7"/><circle cx="239.5" cy="295.7" r="1.3" fill="#111"/>
<text x="246.0" y="299.5" font-size="9.2" fill="#222" textLength="24.5" lengthAdjust="spacingAndGlyphs" >06:56</text>
<text x="272.0" y="299.5" font-size="9.2" fill="#222" textLength="31.5" lengthAdjust="spacingAndGlyphs" >Σ23:22</text>
<text x="213.0" y="313.5" font-size="9" fill="#7a1a1a" textLength="17.0" lengthAdjust="spacingAndGlyphs" stroke="#7a1a1a" stroke-width="0.25">RUS</text>
<text x="502.0" y="313.5" font-size="9" fill="#7a1a1a" textLength="17.0" lengthAdjust="spacingAndGlyphs" stroke="#7a1a1a" stroke-width="0.25">RUS</text>
<text x="523.0" y="313.5" font-size="9" fill="#7a1a1a" textLength="17.0" lengthAdjust="spacingAndGlyphs" stroke="#7a1a1a" stroke-width="0.25">RUS</text>
<g transform="translate(150.0,314.0) rotate(-60)"><path d="M-7 0 l3 -2.3 h9 a1.5 1.5 0 0 1 0 4.6 h-9z" fill="#111"/><rect x="-2.5" y="-0.8" width="6" height="1.6" fill="#ccc"/></g>
<path d="M145.5 320.0 V330.0 M145.5 325.5 H154.5 V330.0" fill="none" stroke="#111" stroke-width="2"/>
<text x="150.0" y="337.9" font-size="10" fill="#222" font-weight="bold" text-anchor="middle" textLength="47.0" lengthAdjust="spacingAndGlyphs" stroke="#222" stroke-width="0.3">9:47 (2x9)</text>
<g fill="none" stroke="#111" stroke-width="1.3"><circle cx="217.0" cy="321.5" r="1.8" fill="#111"/><path d="M212.0 329.5 Q213.0 322.5 217.0 323.5 Q220.0 325.5 221.0 329.5"/><circle cx="218.0" cy="327.5" r="2.3"/><path d="M212.0 329.5 H221.0"/></g>
<circle cx="227.0" cy="324.6" r="4.5" fill="none" stroke="#111" stroke-width="1.7"/><circle cx="227.0" cy="324.6" r="1.3" fill="#111"/>
<text x="222.0" y="338.4" font-size="9.5" fill="#111" font-weight="bold" text-anchor="middle" stroke="#111" stroke-width="0.3">0:40</text>
<g fill="none" stroke="#111" stroke-width="1.3"><circle cx="311.0" cy="312.0" r="1.8" fill="#111"/><path d="M306.0 320.0 Q307.0 313.0 311.0 314.0 Q314.0 316.0 315.0 320.0"/><circle cx="312.0" cy="318.0" r="2.3"/><path d="M306.0 320.0 H315.0"/></g>
<path d="M305.5 319.0 V329.5 M305.5 325.5 H314.5 V329.5" fill="none" stroke="#111" stroke-width="1.9"/>
<text x="310.0" y="338.4" font-size="9.5" fill="#111" font-weight="bold" text-anchor="middle" stroke="#111" stroke-width="0.3">3:04</text>
<g fill="none" stroke="#111" stroke-width="1.3"><circle cx="408.0" cy="312.0" r="1.8" fill="#111"/><path d="M403.0 320.0 Q404.0 313.0 408.0 314.0 Q411.0 316.0 412.0 320.0"/><circle cx="409.0" cy="318.0" r="2.3"/><path d="M403.0 320.0 H412.0"/></g>
<path d="M402.5 319.0 V329.5 M402.5 325.5 H411.5 V329.5" fill="none" stroke="#111" stroke-width="1.9"/>
<text x="407.0" y="338.4" font-size="9.5" fill="#111" font-weight="bold" text-anchor="middle" stroke="#111" stroke-width="0.3">1:26</text>
<g fill="none" stroke="#111" stroke-width="1.3"><circle cx="475.0" cy="321.5" r="1.8" fill="#111"/><path d="M470.0 329.5 Q471.0 322.5 475.0 323.5 Q478.0 325.5 479.0 329.5"/><circle cx="476.0" cy="327.5" r="2.3"/><path d="M470.0 329.5 H479.0"/></g>
<circle cx="484.0" cy="324.6" r="4.5" fill="none" stroke="#111" stroke-width="1.7"/><circle cx="484.0" cy="324.6" r="1.3" fill="#111"/>
<text x="481.0" y="338.4" font-size="9.5" fill="#111" font-weight="bold" text-anchor="middle" stroke="#111" stroke-width="0.3">1:33</text>
<g fill="none" stroke="#111" stroke-width="1.3"><circle cx="533.0" cy="321.5" r="1.8" fill="#111"/><path d="M528.0 329.5 Q529.0 322.5 533.0 323.5 Q536.0 325.5 537.0 329.5"/><circle cx="534.0" cy="327.5" r="2.3"/><path d="M528.0 329.5 H537.0"/></g>
<circle cx="541.0" cy="324.6" r="4.5" fill="none" stroke="#111" stroke-width="1.7"/><circle cx="541.0" cy="324.6" r="1.3" fill="#111"/>
<text x="538.0" y="338.4" font-size="9.5" fill="#111" font-weight="bold" text-anchor="middle" stroke="#111" stroke-width="0.3">0:54</text>
<circle cx="578.0" cy="324.6" r="4.5" fill="none" stroke="#111" stroke-width="1.7"/><circle cx="578.0" cy="324.6" r="1.3" fill="#111"/>
<circle cx="637.0" cy="324.6" r="4.5" fill="none" stroke="#111" stroke-width="1.7"/><circle cx="637.0" cy="324.6" r="1.3" fill="#111"/>
<text x="637.0" y="338.4" font-size="9.5" fill="#111" font-weight="bold" text-anchor="middle" stroke="#111" stroke-width="0.3">2:29</text>
<path d="M723.5 320.0 V330.0 M723.5 325.5 H732.5 V330.0" fill="none" stroke="#111" stroke-width="2"/>
<text x="728.0" y="338.4" font-size="9.5" fill="#10283a" font-weight="bold" text-anchor="middle" stroke="#10283a" stroke-width="0.3">2:12</text>
<path d="M775.5 328 L783 320 M784.5 328 L777 320" stroke="#111" stroke-width="1.8"/><path d="M779.5 316.5 l5.5 5.5 M780.5 316.5 l-5.5 5.5" stroke="#111" stroke-width="3"/>
<path d="M813.5 320.0 V330.0 M813.5 325.5 H822.5 V330.0" fill="none" stroke="#111" stroke-width="2"/>
<text x="818.0" y="338.4" font-size="9.5" fill="#10283a" font-weight="bold" text-anchor="middle" stroke="#10283a" stroke-width="0.3">0:46</text>
<path d="M920.5 320.0 V330.0 M920.5 325.5 H929.5 V330.0" fill="none" stroke="#111" stroke-width="2"/>
<text x="925.0" y="337.9" font-size="10" fill="#8a1a6a" font-weight="bold" text-anchor="middle" textLength="47.0" lengthAdjust="spacingAndGlyphs" stroke="#8a1a6a" stroke-width="0.3">5:11 (3x9)</text>
<text x="37.0" y="316.5" font-size="10" fill="#111" textLength="35.0" lengthAdjust="spacingAndGlyphs" >czwartek</text>
<text x="37.0" y="334.2" font-size="9.4" fill="#111" textLength="46.0" lengthAdjust="spacingAndGlyphs" >19-08-2021</text>
<rect x="91.0" y="366.0" width="63.0" height="2.0" fill="#3c8a56" />
<rect x="208.0" y="366.0" width="320.0" height="2.0" fill="#3c8a56" />
<rect x="615.0" y="366.0" width="55.0" height="2.0" fill="#3c8a56" />
<rect x="697.0" y="366.0" width="319.5" height="2.0" fill="#3c8a56" />
<line x1="91" y1="376.8" x2="1016.5" y2="376.8" stroke="#2c2f66" stroke-width="2" stroke-dasharray="11 9"/>
<rect x="91.0" y="404.5" width="19.0" height="3.0" fill="#c26ae0" />
<rect x="91.0" y="416.0" width="19.0" height="1.2" fill="#cc44dd" />
<line x1="91.5" y1="411.0" x2="91.5" y2="417.0" stroke="#cc44dd" stroke-width="1" />
<line x1="109.5" y1="411.0" x2="109.5" y2="417.0" stroke="#cc44dd" stroke-width="1" />
<line x1="110.5" y1="378.0" x2="110.5" y2="412.0" stroke="#e05050" stroke-width="1" />
<rect x="115.0" y="404.5" width="410.5" height="7.5" fill="#c6f1f5" />
<rect x="111.0" y="386.0" width="4.6" height="26.0" fill="#f2b85a" />
<rect x="111.0" y="410.0" width="4.6" height="3.7" fill="#b8893a" />
<rect x="143.7" y="386.0" width="5.7" height="26.0" fill="#f2b85a" />
<rect x="143.7" y="410.0" width="5.7" height="3.7" fill="#b8893a" />
<rect x="168.0" y="386.0" width="4.0" height="26.0" fill="#fc5c60" />
<rect x="168.0" y="410.0" width="4.0" height="3.7" fill="#b8893a" />
<rect x="172.0" y="386.0" width="8.3" height="26.0" fill="#f2b85a" />
<rect x="172.0" y="410.0" width="8.3" height="3.7" fill="#b8893a" />
<rect x="175.0" y="386.0" width="1.0" height="24.0" fill="#fc5c60" />
<line x1="185.5" y1="372.0" x2="185.5" y2="417.0" stroke="#c04040" stroke-width="1.2" />
<line x1="209.4" y1="366.0" x2="209.4" y2="388.0" stroke="#66dd66" stroke-width="1.2" />
<line x1="208.4" y1="388.0" x2="208.4" y2="413.0" stroke="#111" stroke-width="1.4" stroke-dasharray="3 2"/>
<rect x="528.0" y="378.0" width="29.2" height="34.0" fill="#fc5c60" />
<rect x="528.0" y="395.5" width="29.2" height="14.5" fill="url(#hgrey)" />
<rect x="528.0" y="410.0" width="29.2" height="3.7" fill="#b8893a" />
<rect x="557.0" y="396.0" width="11.0" height="15.5" fill="url(#hcyan)" />
<rect x="557.0" y="405.0" width="11.0" height="6.5" fill="#c6f1f5" opacity="0.75"/>
<rect x="568.2" y="378.0" width="129.6" height="34.0" fill="#fc5c60" />
<rect x="568.2" y="395.5" width="129.6" height="14.5" fill="url(#hgrey)" />
<rect x="568.2" y="410.0" width="129.6" height="3.7" fill="#b8893a" />
<rect x="697.8" y="396.0" width="318.7" height="15.5" fill="url(#hcyan)" />
<rect x="697.8" y="405.0" width="318.7" height="6.5" fill="#c6f1f5" opacity="0.75"/>
<rect x="697.8" y="404.0" width="318.7" height="4.0" fill="url(#hpbar)" />
<rect x="697.8" y="416.0" width="318.7" height="1.2" fill="#cc44dd" />
<line x1="91.0" y1="387.5" x2="1016.5" y2="387.5" stroke="#000" stroke-opacity="0.5" stroke-width="1.5" stroke-dasharray="4 3.5"/>
<line x1="91.0" y1="410.6" x2="91.0" y2="417.5" stroke="#333" stroke-width="1.1" />
<text x="88.1" y="425.8" font-size="9.6" fill="#222" >0</text>
<line x1="129.6" y1="410.6" x2="129.6" y2="417.5" stroke="#333" stroke-width="1.1" />
<text x="126.7" y="425.8" font-size="9.6" fill="#222" >1</text>
<line x1="168.1" y1="410.6" x2="168.1" y2="417.5" stroke="#333" stroke-width="1.1" />
<text x="165.2" y="425.8" font-size="9.6" fill="#222" >2</text>
<line x1="206.6" y1="410.6" x2="206.6" y2="417.5" stroke="#333" stroke-width="1.1" />
<text x="203.7" y="425.8" font-size="9.6" fill="#222" >3</text>
<line x1="245.2" y1="410.6" x2="245.2" y2="417.5" stroke="#333" stroke-width="1.1" />
<text x="242.3" y="425.8" font-size="9.6" fill="#222" >4</text>
<line x1="283.8" y1="410.6" x2="283.8" y2="417.5" stroke="#333" stroke-width="1.1" />
<text x="280.9" y="425.8" font-size="9.6" fill="#222" >5</text>
<line x1="322.3" y1="410.6" x2="322.3" y2="417.5" stroke="#333" stroke-width="1.1" />
<text x="319.4" y="425.8" font-size="9.6" fill="#222" >6</text>
<line x1="360.8" y1="410.6" x2="360.8" y2="417.5" stroke="#333" stroke-width="1.1" />
<text x="357.9" y="425.8" font-size="9.6" fill="#222" >7</text>
<line x1="399.4" y1="410.6" x2="399.4" y2="417.5" stroke="#333" stroke-width="1.1" />
<text x="396.5" y="425.8" font-size="9.6" fill="#222" >8</text>
<line x1="437.9" y1="410.6" x2="437.9" y2="417.5" stroke="#333" stroke-width="1.1" />
<text x="435.1" y="425.8" font-size="9.6" fill="#222" >9</text>
<line x1="476.5" y1="410.6" x2="476.5" y2="417.5" stroke="#333" stroke-width="1.1" />
<text x="473.6" y="425.8" font-size="9.6" fill="#222" >10</text>
<line x1="515.0" y1="410.6" x2="515.0" y2="417.5" stroke="#333" stroke-width="1.1" />
<text x="512.1" y="425.8" font-size="9.6" fill="#222" >11</text>
<line x1="553.6" y1="410.6" x2="553.6" y2="417.5" stroke="#333" stroke-width="1.1" />
<text x="550.7" y="425.8" font-size="9.6" fill="#222" >12</text>
<line x1="592.1" y1="410.6" x2="592.1" y2="417.5" stroke="#333" stroke-width="1.1" />
<text x="589.2" y="425.8" font-size="9.6" fill="#222" >13</text>
<line x1="630.7" y1="410.6" x2="630.7" y2="417.5" stroke="#333" stroke-width="1.1" />
<text x="627.8" y="425.8" font-size="9.6" fill="#222" >14</text>
<line x1="669.2" y1="410.6" x2="669.2" y2="417.5" stroke="#333" stroke-width="1.1" />
<text x="666.4" y="425.8" font-size="9.6" fill="#222" >15</text>
<line x1="707.8" y1="410.6" x2="707.8" y2="417.5" stroke="#333" stroke-width="1.1" />
<text x="704.9" y="425.8" font-size="9.6" fill="#222" >16</text>
<line x1="746.3" y1="410.6" x2="746.3" y2="417.5" stroke="#333" stroke-width="1.1" />
<text x="743.4" y="425.8" font-size="9.6" fill="#222" >17</text>
<line x1="784.9" y1="410.6" x2="784.9" y2="417.5" stroke="#333" stroke-width="1.1" />
<text x="782.0" y="425.8" font-size="9.6" fill="#222" >18</text>
<line x1="823.4" y1="410.6" x2="823.4" y2="417.5" stroke="#333" stroke-width="1.1" />
<text x="820.5" y="425.8" font-size="9.6" fill="#222" >19</text>
<line x1="862.0" y1="410.6" x2="862.0" y2="417.5" stroke="#333" stroke-width="1.1" />
<text x="859.1" y="425.8" font-size="9.6" fill="#222" >20</text>
<line x1="900.5" y1="410.6" x2="900.5" y2="417.5" stroke="#333" stroke-width="1.1" />
<text x="897.6" y="425.8" font-size="9.6" fill="#222" >21</text>
<line x1="939.1" y1="410.6" x2="939.1" y2="417.5" stroke="#333" stroke-width="1.1" />
<text x="936.2" y="425.8" font-size="9.6" fill="#222" >22</text>
<line x1="977.6" y1="410.6" x2="977.6" y2="417.5" stroke="#333" stroke-width="1.1" />
<text x="974.8" y="425.8" font-size="9.6" fill="#222" >23</text>
<line x1="156.0" y1="372.0" x2="156.0" y2="417.3" stroke="#111" stroke-width="2" />
<path d="M149.0 369.5 l4.5 3.5 l-4.5 3.5z" fill="#111"/>
<path d="M159.0 369.5 l4.5 3.5 l-4.5 3.5z" fill="#111"/>
<circle cx="156.0" cy="373.0" r="2.8" fill="#111"/>
<line x1="525.5" y1="370.0" x2="525.5" y2="417.3" stroke="#111" stroke-width="1.4" />
<path d="M528.5 369.5 l4.5 3.5 l-4.5 3.5z" fill="#111"/>
<path d="M525.5 369.5 l3.5 3.5 l-3.5 3.5 l-3.5 -3.5z" fill="#111"/>
<line x1="706.3" y1="370.0" x2="706.3" y2="417.3" stroke="#111" stroke-width="1.4" />
<path d="M699.3 369.5 l4.5 3.5 l-4.5 3.5z" fill="#111"/>
<circle cx="706.3" cy="373.0" r="2.8" fill="#111"/>
<rect x="153.0" y="360.0" width="56.0" height="9.0" fill="#fff" />
<text x="154.0" y="369.5" font-size="9.2" fill="#222" textLength="27.5" lengthAdjust="spacingAndGlyphs" >02:26</text>
<text x="183.0" y="369.5" font-size="9.2" fill="#222" textLength="23.5" lengthAdjust="spacingAndGlyphs" >03:04</text>
<rect x="527.0" y="360.0" width="90.0" height="9.0" fill="#fff" />
<text x="528.0" y="369.5" font-size="9.2" fill="#222" textLength="23.5" lengthAdjust="spacingAndGlyphs" >11:20</text>
<circle cx="557.5" cy="365.7" r="3.5" fill="none" stroke="#111" stroke-width="1.7"/><circle cx="557.5" cy="365.7" r="1.3" fill="#111"/>
<text x="564.0" y="369.5" font-size="9.2" fill="#222" textLength="24.5" lengthAdjust="spacingAndGlyphs" >04:07</text>
<text x="590.0" y="369.5" font-size="9.2" fill="#222" textLength="24.5" lengthAdjust="spacingAndGlyphs" >Σ4:24</text>
<rect x="670.0" y="360.0" width="27.0" height="9.0" fill="#fff" />
<text x="671.0" y="369.5" font-size="9.2" fill="#222" textLength="23.0" lengthAdjust="spacingAndGlyphs" >15:44</text>
<text x="137.0" y="383.5" font-size="9" fill="#333" textLength="17.0" lengthAdjust="spacingAndGlyphs" >RUS</text>
<text x="155.0" y="383.5" font-size="9" fill="#333" textLength="17.0" lengthAdjust="spacingAndGlyphs" >RUS</text>
<text x="529.0" y="383.5" font-size="9" fill="#7a1a1a" textLength="17.0" lengthAdjust="spacingAndGlyphs" stroke="#7a1a1a" stroke-width="0.25">RUS</text>
<text x="680.0" y="383.5" font-size="9" fill="#7a1a1a" textLength="17.0" lengthAdjust="spacingAndGlyphs" stroke="#7a1a1a" stroke-width="0.25">RUS</text>
<path d="M95.5 390.0 V400.0 M95.5 395.5 H104.5 V400.0" fill="none" stroke="#111" stroke-width="2"/>
<path d="M125.5 390.0 V400.0 M125.5 395.5 H134.5 V400.0" fill="none" stroke="#111" stroke-width="2"/>
<text x="128.0" y="408.4" font-size="10" fill="#1a2a5a" font-weight="bold" text-anchor="middle" stroke="#1a2a5a" stroke-width="0.3">0:43</text>
<g fill="none" stroke="#111" stroke-width="1.3"><circle cx="164.0" cy="382.0" r="1.8" fill="#111"/><path d="M159.0 390.0 Q160.0 383.0 164.0 384.0 Q167.0 386.0 168.0 390.0"/><circle cx="165.0" cy="388.0" r="2.3"/><path d="M159.0 390.0 H168.0"/></g>
<path d="M158.5 389.0 V399.5 M158.5 395.5 H167.5 V399.5" fill="none" stroke="#111" stroke-width="1.9"/>
<g transform="translate(200.0,384.0) rotate(-60)"><path d="M-7 0 l3 -2.3 h9 a1.5 1.5 0 0 1 0 4.6 h-9z" fill="#111"/><rect x="-2.5" y="-0.8" width="6" height="1.6" fill="#ccc"/></g>
<g fill="none" stroke="#111" stroke-width="1.3"><circle cx="368.0" cy="380.0" r="1.8" fill="#111"/><path d="M363.0 388.0 Q364.0 381.0 368.0 382.0 Q371.0 384.0 372.0 388.0"/><circle cx="369.0" cy="386.0" r="2.3"/><path d="M363.0 388.0 H372.0"/></g>
<text x="355.0" y="408.4" font-size="9.5" fill="#10283a" font-weight="bold" text-anchor="middle" stroke="#10283a" stroke-width="0.3">8:54</text>
<circle cx="542.0" cy="394.6" r="4.5" fill="none" stroke="#111" stroke-width="1.7"/><circle cx="542.0" cy="394.6" r="1.3" fill="#111"/>
<text x="542.0" y="408.4" font-size="9.5" fill="#111" font-weight="bold" text-anchor="middle" stroke="#111" stroke-width="0.3">0:46</text>
<path d="M557.5 390.0 V400.0 M557.5 395.5 H566.5 V400.0" fill="none" stroke="#111" stroke-width="2"/>
<circle cx="632.0" cy="394.6" r="4.5" fill="none" stroke="#111" stroke-width="1.7"/><circle cx="632.0" cy="394.6" r="1.3" fill="#111"/>
<text x="632.0" y="408.4" font-size="9.5" fill="#111" font-weight="bold" text-anchor="middle" stroke="#111" stroke-width="0.3">3:21</text>
<path d="M851.5 390.0 V400.0 M851.5 395.5 H860.5 V400.0" fill="none" stroke="#111" stroke-width="2"/>
<text x="856.0" y="408.4" font-size="10" fill="#8a1a4a" font-weight="bold" text-anchor="middle" textLength="47.0" lengthAdjust="spacingAndGlyphs" stroke="#8a1a4a" stroke-width="0.3">8:45 (4x9)</text>
<text x="37.0" y="386.5" font-size="10" fill="#111" textLength="25.0" lengthAdjust="spacingAndGlyphs" >piątek</text>
<text x="37.0" y="404.2" font-size="9.4" fill="#111" textLength="46.0" lengthAdjust="spacingAndGlyphs" >20-08-2021</text>
<rect x="91.0" y="436.0" width="19.0" height="2.0" fill="#3c8a56" />
<rect x="237.0" y="436.0" width="529.0" height="2.0" fill="#3c8a56" />
<rect x="793.0" y="436.0" width="223.5" height="2.0" fill="#3c8a56" />
<rect x="237.0" y="439.0" width="529.0" height="1.3" fill="#d49a94" />
<path d="M110.4 448.0 V443.0 H327.0 V448.0" fill="none" stroke="#8e2424" stroke-width="1.6"/>
<line x1="91" y1="446.8" x2="1016.5" y2="446.8" stroke="#2c2f66" stroke-width="2" stroke-dasharray="11 9"/>
<rect x="91.0" y="466.0" width="19.0" height="15.5" fill="url(#hcyan)" />
<rect x="91.0" y="475.0" width="19.0" height="6.5" fill="#c6f1f5" opacity="0.75"/>
<rect x="91.0" y="474.0" width="19.0" height="4.0" fill="url(#hpbar)" />
<rect x="91.0" y="486.0" width="19.0" height="1.2" fill="#cc44dd" />
<line x1="91.5" y1="481.0" x2="91.5" y2="487.0" stroke="#cc44dd" stroke-width="1" />
<line x1="109.5" y1="481.0" x2="109.5" y2="487.0" stroke="#cc44dd" stroke-width="1" />
<rect x="110.4" y="448.0" width="216.6" height="34.0" fill="#fc5c60" />
<rect x="110.4" y="465.5" width="216.6" height="14.5" fill="url(#hgrey)" />
<rect x="110.4" y="480.0" width="216.6" height="3.7" fill="#b8893a" />
<rect x="327.0" y="466.0" width="173.7" height="15.5" fill="url(#hcyan)" />
<rect x="327.0" y="475.0" width="173.7" height="6.5" fill="#c6f1f5" opacity="0.75"/>
<rect x="327.0" y="474.0" width="173.7" height="4.0" fill="url(#hpbar)" />
<rect x="500.7" y="448.0" width="123.2" height="34.0" fill="#fc5c60" />
<rect x="500.7" y="465.5" width="123.2" height="14.5" fill="url(#hgrey)" />
<rect x="500.7" y="480.0" width="123.2" height="3.7" fill="#b8893a" />
<rect x="623.9" y="466.0" width="35.1" height="15.5" fill="url(#hcyan)" />
<rect x="623.9" y="475.0" width="35.1" height="6.5" fill="#c6f1f5" opacity="0.75"/>
<rect x="659.0" y="448.0" width="43.6" height="34.0" fill="#fc5c60" />
<rect x="659.0" y="465.5" width="43.6" height="14.5" fill="url(#hgrey)" />
<rect x="659.0" y="480.0" width="43.6" height="3.7" fill="#b8893a" />
<rect x="705.4" y="448.0" width="45.2" height="34.0" fill="#fc5c60" />
<rect x="705.4" y="465.5" width="45.2" height="14.5" fill="url(#hgrey)" />
<rect x="705.4" y="480.0" width="45.2" height="3.7" fill="#b8893a" />
<rect x="751.5" y="448.0" width="23.0" height="34.0" fill="#fc5c60" />
<rect x="751.5" y="465.5" width="23.0" height="16.5" fill="url(#hgrey)" />
<rect x="776.0" y="448.0" width="17.6" height="34.0" fill="#fc5c60" />
<rect x="776.0" y="465.5" width="17.6" height="16.5" fill="url(#hgrey)" />
<rect x="793.6" y="466.0" width="222.9" height="15.5" fill="url(#hcyan)" />
<rect x="793.6" y="475.0" width="222.9" height="6.5" fill="#c6f1f5" opacity="0.75"/>
<rect x="793.6" y="474.0" width="222.9" height="4.0" fill="url(#hpbar)" />
<rect x="793.6" y="486.0" width="222.9" height="1.2" fill="#cc44dd" />
<line x1="91.0" y1="457.5" x2="1016.5" y2="457.5" stroke="#000" stroke-opacity="0.5" stroke-width="1.5" stroke-dasharray="4 3.5"/>
<line x1="91.0" y1="480.6" x2="91.0" y2="487.5" stroke="#333" stroke-width="1.1" />
<text x="88.1" y="495.8" font-size="9.6" fill="#222" >0</text>
<line x1="129.6" y1="480.6" x2="129.6" y2="487.5" stroke="#333" stroke-width="1.1" />
<text x="126.7" y="495.8" font-size="9.6" fill="#222" >1</text>
<line x1="168.1" y1="480.6" x2="168.1" y2="487.5" stroke="#333" stroke-width="1.1" />
<text x="165.2" y="495.8" font-size="9.6" fill="#222" >2</text>
<line x1="206.6" y1="480.6" x2="206.6" y2="487.5" stroke="#333" stroke-width="1.1" />
<text x="203.7" y="495.8" font-size="9.6" fill="#222" >3</text>
<line x1="245.2" y1="480.6" x2="245.2" y2="487.5" stroke="#333" stroke-width="1.1" />
<text x="242.3" y="495.8" font-size="9.6" fill="#222" >4</text>
<line x1="283.8" y1="480.6" x2="283.8" y2="487.5" stroke="#333" stroke-width="1.1" />
<text x="280.9" y="495.8" font-size="9.6" fill="#222" >5</text>
<line x1="322.3" y1="480.6" x2="322.3" y2="487.5" stroke="#333" stroke-width="1.1" />
<text x="319.4" y="495.8" font-size="9.6" fill="#222" >6</text>
<line x1="360.8" y1="480.6" x2="360.8" y2="487.5" stroke="#333" stroke-width="1.1" />
<text x="357.9" y="495.8" font-size="9.6" fill="#222" >7</text>
<line x1="399.4" y1="480.6" x2="399.4" y2="487.5" stroke="#333" stroke-width="1.1" />
<text x="396.5" y="495.8" font-size="9.6" fill="#222" >8</text>
<line x1="437.9" y1="480.6" x2="437.9" y2="487.5" stroke="#333" stroke-width="1.1" />
<text x="435.1" y="495.8" font-size="9.6" fill="#222" >9</text>
<line x1="476.5" y1="480.6" x2="476.5" y2="487.5" stroke="#333" stroke-width="1.1" />
<text x="473.6" y="495.8" font-size="9.6" fill="#222" >10</text>
<line x1="515.0" y1="480.6" x2="515.0" y2="487.5" stroke="#333" stroke-width="1.1" />
<text x="512.1" y="495.8" font-size="9.6" fill="#222" >11</text>
<line x1="553.6" y1="480.6" x2="553.6" y2="487.5" stroke="#333" stroke-width="1.1" />
<text x="550.7" y="495.8" font-size="9.6" fill="#222" >12</text>
<line x1="592.1" y1="480.6" x2="592.1" y2="487.5" stroke="#333" stroke-width="1.1" />
<text x="589.2" y="495.8" font-size="9.6" fill="#222" >13</text>
<line x1="630.7" y1="480.6" x2="630.7" y2="487.5" stroke="#333" stroke-width="1.1" />
<text x="627.8" y="495.8" font-size="9.6" fill="#222" >14</text>
<line x1="669.2" y1="480.6" x2="669.2" y2="487.5" stroke="#333" stroke-width="1.1" />
<text x="666.4" y="495.8" font-size="9.6" fill="#222" >15</text>
<line x1="707.8" y1="480.6" x2="707.8" y2="487.5" stroke="#333" stroke-width="1.1" />
<text x="704.9" y="495.8" font-size="9.6" fill="#222" >16</text>
<line x1="746.3" y1="480.6" x2="746.3" y2="487.5" stroke="#333" stroke-width="1.1" />
<text x="743.4" y="495.8" font-size="9.6" fill="#222" >17</text>
<line x1="784.9" y1="480.6" x2="784.9" y2="487.5" stroke="#333" stroke-width="1.1" />
<text x="782.0" y="495.8" font-size="9.6" fill="#222" >18</text>
<line x1="823.4" y1="480.6" x2="823.4" y2="487.5" stroke="#333" stroke-width="1.1" />
<text x="820.5" y="495.8" font-size="9.6" fill="#222" >19</text>
<line x1="862.0" y1="480.6" x2="862.0" y2="487.5" stroke="#333" stroke-width="1.1" />
<text x="859.1" y="495.8" font-size="9.6" fill="#222" >20</text>
<line x1="900.5" y1="480.6" x2="900.5" y2="487.5" stroke="#333" stroke-width="1.1" />
<text x="897.6" y="495.8" font-size="9.6" fill="#222" >21</text>
<line x1="939.1" y1="480.6" x2="939.1" y2="487.5" stroke="#333" stroke-width="1.1" />
<text x="936.2" y="495.8" font-size="9.6" fill="#222" >22</text>
<line x1="977.6" y1="480.6" x2="977.6" y2="487.5" stroke="#333" stroke-width="1.1" />
<text x="974.8" y="495.8" font-size="9.6" fill="#222" >23</text>
<line x1="109.5" y1="440.0" x2="109.5" y2="482.0" stroke="#111" stroke-width="1.4" />
<path d="M112.5 439.5 l4.5 3.5 l-4.5 3.5z" fill="#111"/>
<path d="M109.5 439.5 l3.5 3.5 l-3.5 3.5 l-3.5 -3.5z" fill="#111"/>
<line x1="172.2" y1="440.0" x2="172.2" y2="489.0" stroke="#111" stroke-width="2.5" />
<path d="M165.2 439.5 l4.5 3.5 l-4.5 3.5z" fill="#111"/>
<path d="M175.2 439.5 l4.5 3.5 l-4.5 3.5z" fill="#111"/>
<circle cx="172.2" cy="443.0" r="2.8" fill="#111"/>
<line x1="208.8" y1="457.0" x2="208.8" y2="482.0" stroke="#111" stroke-width="1.4" stroke-dasharray="3 2"/>
<line x1="742.0" y1="440.0" x2="742.0" y2="489.0" stroke="#111" stroke-width="2.5" />
<path d="M735.0 439.5 l4.5 3.5 l-4.5 3.5z" fill="#111"/>
<path d="M745.0 439.5 l4.5 3.5 l-4.5 3.5z" fill="#111"/>
<circle cx="742.0" cy="443.0" r="2.8" fill="#111"/>
<line x1="800.7" y1="440.0" x2="800.7" y2="487.3" stroke="#555" stroke-width="1.4" />
<path d="M793.7 439.5 l4.5 3.5 l-4.5 3.5z" fill="#111"/>
<circle cx="800.7" cy="443.0" r="2.8" fill="#111"/>
<rect x="109.0" y="430.0" width="130.0" height="9.0" fill="#fff" />
<text x="110.0" y="439.5" font-size="9.2" fill="#222" textLength="23.5" lengthAdjust="spacingAndGlyphs" >00:29</text>
<circle cx="139.5" cy="435.7" r="3.5" fill="none" stroke="#cc2a2a" stroke-width="1.7"/><circle cx="139.5" cy="435.7" r="1.3" fill="#cc2a2a"/>
<text x="146.0" y="439.5" font-size="9.5" fill="#b42a2a" font-weight="bold" textLength="25.5" lengthAdjust="spacingAndGlyphs" >12:08</text>
<text x="173.0" y="439.5" font-size="9.2" fill="#222" textLength="31.5" lengthAdjust="spacingAndGlyphs" >(3x10)</text>
<text x="206.0" y="439.5" font-size="9.2" fill="#222" textLength="30.5" lengthAdjust="spacingAndGlyphs" >Σ17:45</text>
<rect x="766.0" y="430.0" width="27.0" height="9.0" fill="#fff" />
<text x="767.0" y="439.5" font-size="9.2" fill="#222" textLength="23.0" lengthAdjust="spacingAndGlyphs" >18:14</text>
<text x="114.0" y="453.5" font-size="9" fill="#7a1a1a" textLength="17.0" lengthAdjust="spacingAndGlyphs" stroke="#7a1a1a" stroke-width="0.25">RUS</text>
<text x="153.0" y="453.5" font-size="9" fill="#7a1a1a" textLength="17.0" lengthAdjust="spacingAndGlyphs" stroke="#7a1a1a" stroke-width="0.25">RUS</text>
<text x="177.0" y="453.5" font-size="9" fill="#7a1a1a" textLength="17.0" lengthAdjust="spacingAndGlyphs" stroke="#7a1a1a" stroke-width="0.25">RUS</text>
<text x="723.0" y="453.5" font-size="9" fill="#7a1a1a" textLength="17.0" lengthAdjust="spacingAndGlyphs" stroke="#7a1a1a" stroke-width="0.25">RUS</text>
<text x="748.0" y="453.5" font-size="9" fill="#7a1a1a" textLength="17.0" lengthAdjust="spacingAndGlyphs" stroke="#7a1a1a" stroke-width="0.25">RUS</text>
<text x="783.0" y="453.5" font-size="9" fill="#7a1a1a" textLength="17.0" lengthAdjust="spacingAndGlyphs" stroke="#7a1a1a" stroke-width="0.25">RUS</text>
<path d="M94.5 460.0 V470.0 M94.5 465.5 H103.5 V470.0" fill="none" stroke="#111" stroke-width="2"/>
<circle cx="140.0" cy="464.6" r="4.5" fill="none" stroke="#111" stroke-width="1.7"/><circle cx="140.0" cy="464.6" r="1.3" fill="#111"/>
<text x="140.0" y="478.4" font-size="9.5" fill="#111" font-weight="bold" text-anchor="middle" stroke="#111" stroke-width="0.3">1:36</text>
<circle cx="190.0" cy="464.6" r="4.5" fill="none" stroke="#111" stroke-width="1.7"/><circle cx="190.0" cy="464.6" r="1.3" fill="#111"/>
<text x="190.0" y="478.4" font-size="9.5" fill="#111" font-weight="bold" text-anchor="middle" stroke="#111" stroke-width="0.3">0:51</text>
<g fill="none" stroke="#111" stroke-width="1.3"><circle cx="263.0" cy="461.5" r="1.8" fill="#111"/><path d="M258.0 469.5 Q259.0 462.5 263.0 463.5 Q266.0 465.5 267.0 469.5"/><circle cx="264.0" cy="467.5" r="2.3"/><path d="M258.0 469.5 H267.0"/></g>
<circle cx="271.0" cy="464.6" r="4.5" fill="none" stroke="#111" stroke-width="1.7"/><circle cx="271.0" cy="464.6" r="1.3" fill="#111"/>
<text x="266.0" y="478.4" font-size="9.5" fill="#111" font-weight="bold" text-anchor="middle" stroke="#111" stroke-width="0.3">3:09</text>
<g fill="none" stroke="#111" stroke-width="1.3"><circle cx="414.0" cy="452.0" r="1.8" fill="#111"/><path d="M409.0 460.0 Q410.0 453.0 414.0 454.0 Q417.0 456.0 418.0 460.0"/><circle cx="415.0" cy="458.0" r="2.3"/><path d="M409.0 460.0 H418.0"/></g>
<path d="M408.5 459.0 V469.5 M408.5 465.5 H417.5 V469.5" fill="none" stroke="#111" stroke-width="1.9"/>
<text x="413.0" y="478.4" font-size="9.5" fill="#111" font-weight="bold" text-anchor="middle" stroke="#111" stroke-width="0.3">4:28</text>
<g fill="none" stroke="#111" stroke-width="1.3"><circle cx="558.0" cy="461.5" r="1.8" fill="#111"/><path d="M553.0 469.5 Q554.0 462.5 558.0 463.5 Q561.0 465.5 562.0 469.5"/><circle cx="559.0" cy="467.5" r="2.3"/><path d="M553.0 469.5 H562.0"/></g>
<circle cx="566.0" cy="464.6" r="4.5" fill="none" stroke="#111" stroke-width="1.7"/><circle cx="566.0" cy="464.6" r="1.3" fill="#111"/>
<text x="562.0" y="478.4" font-size="9.5" fill="#111" font-weight="bold" text-anchor="middle" stroke="#111" stroke-width="0.3">3:13</text>
<g fill="none" stroke="#111" stroke-width="1.3"><circle cx="641.0" cy="452.0" r="1.8" fill="#111"/><path d="M636.0 460.0 Q637.0 453.0 641.0 454.0 Q644.0 456.0 645.0 460.0"/><circle cx="642.0" cy="458.0" r="2.3"/><path d="M636.0 460.0 H645.0"/></g>
<path d="M635.5 459.0 V469.5 M635.5 465.5 H644.5 V469.5" fill="none" stroke="#111" stroke-width="1.9"/>
<text x="641.0" y="478.4" font-size="9.5" fill="#10283a" font-weight="bold" text-anchor="middle" stroke="#10283a" stroke-width="0.3">0:55</text>
<g fill="none" stroke="#111" stroke-width="1.3"><circle cx="677.0" cy="461.5" r="1.8" fill="#111"/><path d="M672.0 469.5 Q673.0 462.5 677.0 463.5 Q680.0 465.5 681.0 469.5"/><circle cx="678.0" cy="467.5" r="2.3"/><path d="M672.0 469.5 H681.0"/></g>
<circle cx="685.0" cy="464.6" r="4.5" fill="none" stroke="#111" stroke-width="1.7"/><circle cx="685.0" cy="464.6" r="1.3" fill="#111"/>
<text x="681.0" y="478.4" font-size="9.5" fill="#111" font-weight="bold" text-anchor="middle" stroke="#111" stroke-width="0.3">1:08</text>
<g fill="none" stroke="#111" stroke-width="1.3"><circle cx="717.0" cy="461.5" r="1.8" fill="#111"/><path d="M712.0 469.5 Q713.0 462.5 717.0 463.5 Q720.0 465.5 721.0 469.5"/><circle cx="718.0" cy="467.5" r="2.3"/><path d="M712.0 469.5 H721.0"/></g>
<circle cx="725.0" cy="464.6" r="4.5" fill="none" stroke="#111" stroke-width="1.7"/><circle cx="725.0" cy="464.6" r="1.3" fill="#111"/>
<text x="722.0" y="478.4" font-size="9.5" fill="#111" font-weight="bold" text-anchor="middle" stroke="#111" stroke-width="0.3">0:57</text>
<circle cx="763.0" cy="464.6" r="4.5" fill="none" stroke="#111" stroke-width="1.7"/><circle cx="763.0" cy="464.6" r="1.3" fill="#111"/>
<text x="763.0" y="478.4" font-size="9.5" fill="#111" font-weight="bold" text-anchor="middle" stroke="#111" stroke-width="0.3">0:35</text>
<circle cx="785.0" cy="464.6" r="4.5" fill="none" stroke="#111" stroke-width="1.7"/><circle cx="785.0" cy="464.6" r="1.3" fill="#111"/>
<path d="M899.5 460.0 V470.0 M899.5 465.5 H908.5 V470.0" fill="none" stroke="#111" stroke-width="2"/>
<text x="904.0" y="478.4" font-size="9.5" fill="#8a1a6a" font-weight="bold" text-anchor="middle" stroke="#8a1a6a" stroke-width="0.3">8:50</text>
<text x="37.0" y="456.5" font-size="10" fill="#111" textLength="27.0" lengthAdjust="spacingAndGlyphs" >sobota</text>
<text x="37.0" y="474.2" font-size="9.4" fill="#111" textLength="46.0" lengthAdjust="spacingAndGlyphs" >21-08-2021</text>
<rect x="108.0" y="506.0" width="214.0" height="2.0" fill="#3c8a56" />
<rect x="450.0" y="506.0" width="505.0" height="2.0" fill="#3c8a56" />
<rect x="979.0" y="506.0" width="37.5" height="2.0" fill="#3c8a56" />
<rect x="450.0" y="509.0" width="505.0" height="1.3" fill="#d49a94" />
<path d="M548.8 518.0 V513.0 H752.4 V518.0" fill="none" stroke="#8e2424" stroke-width="1.6"/>
<line x1="91" y1="516.8" x2="1016.5" y2="516.8" stroke="#2c2f66" stroke-width="2" stroke-dasharray="11 9"/>
<line x1="1016.0" y1="506.0" x2="1016.0" y2="517.0" stroke="#3c8a56" stroke-width="1.5" />
<path d="M91 527.5 H209 V549" fill="none" stroke="#555" stroke-width="1" stroke-dasharray="4 3"/>
<rect x="91.0" y="535.5" width="17.0" height="16.0" fill="url(#hcyan)" />
<rect x="91.0" y="544.4" width="118.0" height="3.6" fill="#c26ae0" />
<rect x="91.0" y="556.0" width="118.0" height="1.2" fill="#cc44dd" />
<rect x="209.0" y="544.5" width="113.0" height="7.5" fill="#c6f1f5" />
<line x1="109.5" y1="506.0" x2="109.5" y2="555.0" stroke="#66dd66" stroke-width="1.2" />
<line x1="208.8" y1="527.0" x2="208.8" y2="552.0" stroke="#111" stroke-width="1.4" stroke-dasharray="3 2"/>
<rect x="322.4" y="518.0" width="60.6" height="34.0" fill="#fc5c60" />
<rect x="322.4" y="550.0" width="60.6" height="3.7" fill="#b8893a" />
<rect x="383.0" y="518.0" width="3.5" height="34.0" fill="#f2b85a" />
<rect x="386.5" y="518.0" width="111.5" height="34.0" fill="#fc5c60" />
<rect x="386.5" y="550.0" width="111.5" height="3.7" fill="#b8893a" />
<rect x="383.0" y="550.0" width="3.5" height="3.7" fill="#b8893a" />
<rect x="498.0" y="544.5" width="51.0" height="7.5" fill="#c6f1f5" />
<rect x="548.8" y="518.0" width="65.8" height="34.0" fill="#fc5c60" />
<rect x="548.8" y="550.0" width="65.8" height="3.7" fill="#b8893a" />
<rect x="614.6" y="544.5" width="9.4" height="7.5" fill="#c6f1f5" />
<rect x="624.0" y="518.0" width="5.0" height="34.0" fill="#f2b85a" />
<line x1="624.5" y1="518.0" x2="624.5" y2="552.0" stroke="#e05050" stroke-width="1" />
<rect x="631.0" y="518.0" width="121.4" height="34.0" fill="#fc5c60" />
<rect x="752.4" y="544.5" width="45.5" height="7.5" fill="#c6f1f5" />
<rect x="797.9" y="518.0" width="115.0" height="34.0" fill="#fc5c60" />
<rect x="912.9" y="544.5" width="7.9" height="7.5" fill="#c6f1f5" />
<rect x="920.8" y="518.0" width="56.2" height="34.0" fill="#fc5c60" />
<rect x="977.0" y="518.0" width="3.0" height="34.0" fill="#f2b85a" />
<rect x="980.0" y="544.5" width="36.5" height="7.5" fill="#c6f1f5" />
<rect x="980.0" y="541.5" width="36.5" height="3.0" fill="#c8c8d0" />
<rect x="980.0" y="544.4" width="36.5" height="3.6" fill="#c26ae0" />
<rect x="980.0" y="556.0" width="36.5" height="1.2" fill="#cc44dd" />
<line x1="91.0" y1="550.6" x2="91.0" y2="557.5" stroke="#333" stroke-width="1.1" />
<text x="88.1" y="565.8" font-size="9.6" fill="#222" >0</text>
<line x1="129.6" y1="550.6" x2="129.6" y2="557.5" stroke="#333" stroke-width="1.1" />
<text x="126.7" y="565.8" font-size="9.6" fill="#222" >1</text>
<line x1="168.1" y1="550.6" x2="168.1" y2="557.5" stroke="#333" stroke-width="1.1" />
<text x="165.2" y="565.8" font-size="9.6" fill="#222" >2</text>
<line x1="206.6" y1="550.6" x2="206.6" y2="557.5" stroke="#333" stroke-width="1.1" />
<text x="203.7" y="565.8" font-size="9.6" fill="#222" >3</text>
<line x1="245.2" y1="550.6" x2="245.2" y2="557.5" stroke="#333" stroke-width="1.1" />
<text x="242.3" y="565.8" font-size="9.6" fill="#222" >4</text>
<line x1="283.8" y1="550.6" x2="283.8" y2="557.5" stroke="#333" stroke-width="1.1" />
<text x="280.9" y="565.8" font-size="9.6" fill="#222" >5</text>
<line x1="322.3" y1="550.6" x2="322.3" y2="557.5" stroke="#333" stroke-width="1.1" />
<text x="319.4" y="565.8" font-size="9.6" fill="#222" >6</text>
<line x1="360.8" y1="550.6" x2="360.8" y2="557.5" stroke="#333" stroke-width="1.1" />
<text x="357.9" y="565.8" font-size="9.6" fill="#222" >7</text>
<line x1="399.4" y1="550.6" x2="399.4" y2="557.5" stroke="#333" stroke-width="1.1" />
<text x="396.5" y="565.8" font-size="9.6" fill="#222" >8</text>
<line x1="437.9" y1="550.6" x2="437.9" y2="557.5" stroke="#333" stroke-width="1.1" />
<text x="435.1" y="565.8" font-size="9.6" fill="#222" >9</text>
<line x1="476.5" y1="550.6" x2="476.5" y2="557.5" stroke="#333" stroke-width="1.1" />
<text x="473.6" y="565.8" font-size="9.6" fill="#222" >10</text>
<line x1="515.0" y1="550.6" x2="515.0" y2="557.5" stroke="#333" stroke-width="1.1" />
<text x="512.1" y="565.8" font-size="9.6" fill="#222" >11</text>
<line x1="553.6" y1="550.6" x2="553.6" y2="557.5" stroke="#333" stroke-width="1.1" />
<text x="550.7" y="565.8" font-size="9.6" fill="#222" >12</text>
<line x1="592.1" y1="550.6" x2="592.1" y2="557.5" stroke="#333" stroke-width="1.1" />
<text x="589.2" y="565.8" font-size="9.6" fill="#222" >13</text>
<line x1="630.7" y1="550.6" x2="630.7" y2="557.5" stroke="#333" stroke-width="1.1" />
<text x="627.8" y="565.8" font-size="9.6" fill="#222" >14</text>
<line x1="669.2" y1="550.6" x2="669.2" y2="557.5" stroke="#333" stroke-width="1.1" />
<text x="666.4" y="565.8" font-size="9.6" fill="#222" >15</text>
<line x1="707.8" y1="550.6" x2="707.8" y2="557.5" stroke="#333" stroke-width="1.1" />
<text x="704.9" y="565.8" font-size="9.6" fill="#222" >16</text>
<line x1="746.3" y1="550.6" x2="746.3" y2="557.5" stroke="#333" stroke-width="1.1" />
<text x="743.4" y="565.8" font-size="9.6" fill="#222" >17</text>
<line x1="784.9" y1="550.6" x2="784.9" y2="557.5" stroke="#333" stroke-width="1.1" />
<text x="782.0" y="565.8" font-size="9.6" fill="#222" >18</text>
<line x1="823.4" y1="550.6" x2="823.4" y2="557.5" stroke="#333" stroke-width="1.1" />
<text x="820.5" y="565.8" font-size="9.6" fill="#222" >19</text>
<line x1="862.0" y1="550.6" x2="862.0" y2="557.5" stroke="#333" stroke-width="1.1" />
<text x="859.1" y="565.8" font-size="9.6" fill="#222" >20</text>
<line x1="900.5" y1="550.6" x2="900.5" y2="557.5" stroke="#333" stroke-width="1.1" />
<text x="897.6" y="565.8" font-size="9.6" fill="#222" >21</text>
<line x1="939.1" y1="550.6" x2="939.1" y2="557.5" stroke="#333" stroke-width="1.1" />
<text x="936.2" y="565.8" font-size="9.6" fill="#222" >22</text>
<line x1="977.6" y1="550.6" x2="977.6" y2="557.5" stroke="#333" stroke-width="1.1" />
<text x="974.8" y="565.8" font-size="9.6" fill="#222" >23</text>
<line x1="319.6" y1="510.0" x2="319.6" y2="557.3" stroke="#111" stroke-width="1.4" />
<path d="M322.6 509.5 l4.5 3.5 l-4.5 3.5z" fill="#111"/>
<path d="M319.6 509.5 l3.5 3.5 l-3.5 3.5 l-3.5 -3.5z" fill="#111"/>
<line x1="595.8" y1="510.0" x2="595.8" y2="559.0" stroke="#111" stroke-width="3" />
<path d="M588.8 509.5 l4.5 3.5 l-4.5 3.5z" fill="#111"/>
<path d="M598.8 509.5 l4.5 3.5 l-4.5 3.5z" fill="#111"/>
<circle cx="595.8" cy="513.0" r="2.8" fill="#111"/>
<line x1="979.8" y1="510.0" x2="979.8" y2="557.3" stroke="#111" stroke-width="1.6" />
<path d="M972.8 509.5 l4.5 3.5 l-4.5 3.5z" fill="#111"/>
<circle cx="979.8" cy="513.0" r="2.8" fill="#111"/>
<rect x="83.0" y="500.0" width="25.0" height="9.0" fill="#fff" />
<text x="84.0" y="509.5" font-size="9.2" fill="#222" textLength="23.0" lengthAdjust="spacingAndGlyphs" >00:29</text>
<rect x="321.0" y="500.0" width="131.0" height="9.0" fill="#fff" />
<text x="322.0" y="509.5" font-size="9.2" fill="#222" textLength="24.5" lengthAdjust="spacingAndGlyphs" >06:01</text>
<circle cx="352.5" cy="505.7" r="3.5" fill="none" stroke="#cc2a2a" stroke-width="1.7"/><circle cx="352.5" cy="505.7" r="1.3" fill="#cc2a2a"/>
<text x="359.0" y="509.5" font-size="9.5" fill="#b42a2a" font-weight="bold" textLength="25.5" lengthAdjust="spacingAndGlyphs" >13:52</text>
<text x="386.0" y="509.5" font-size="9.2" fill="#222" textLength="31.5" lengthAdjust="spacingAndGlyphs" >(4x10)</text>
<text x="419.0" y="509.5" font-size="9.2" fill="#222" textLength="30.5" lengthAdjust="spacingAndGlyphs" >Σ17:02</text>
<rect x="955.0" y="500.0" width="24.0" height="9.0" fill="#fff" />
<text x="955.0" y="509.5" font-size="9.2" fill="#222" textLength="23.0" lengthAdjust="spacingAndGlyphs" >23:03</text>
<text x="323.0" y="523.5" font-size="9" fill="#7a1a1a" textLength="17.0" lengthAdjust="spacingAndGlyphs" stroke="#7a1a1a" stroke-width="0.25">RUS</text>
<text x="577.0" y="523.5" font-size="9" fill="#7a1a1a" textLength="17.0" lengthAdjust="spacingAndGlyphs" stroke="#7a1a1a" stroke-width="0.25">RUS</text>
<text x="601.0" y="523.5" font-size="9" fill="#111" font-weight="bold" textLength="17.0" lengthAdjust="spacingAndGlyphs" >RUS</text>
<text x="966.0" y="523.5" font-size="9" fill="#7a2020" textLength="12.0" lengthAdjust="spacingAndGlyphs" >BY</text>
<path d="M142.5 530.0 V540.0 M142.5 535.5 H151.5 V540.0" fill="none" stroke="#111" stroke-width="2"/>
<text x="150.0" y="548.4" font-size="9.5" fill="#8a1a6a" font-weight="bold" text-anchor="middle" stroke="#8a1a6a" stroke-width="0.3">8:50</text>
<path d="M260.5 530.0 V540.0 M260.5 535.5 H269.5 V540.0" fill="none" stroke="#111" stroke-width="2"/>
<text x="265.0" y="548.4" font-size="9.5" fill="#10283a" font-weight="bold" text-anchor="middle" stroke="#10283a" stroke-width="0.3">11:47</text>
<g fill="none" stroke="#111" stroke-width="1.3"><circle cx="348.0" cy="531.5" r="1.8" fill="#111"/><path d="M343.0 539.5 Q344.0 532.5 348.0 533.5 Q351.0 535.5 352.0 539.5"/><circle cx="349.0" cy="537.5" r="2.3"/><path d="M343.0 539.5 H352.0"/></g>
<circle cx="356.0" cy="534.6" r="4.5" fill="none" stroke="#111" stroke-width="1.7"/><circle cx="356.0" cy="534.6" r="1.3" fill="#111"/>
<text x="353.0" y="548.4" font-size="9.5" fill="#111" font-weight="bold" text-anchor="middle" stroke="#111" stroke-width="0.3">1:34</text>
<g fill="none" stroke="#111" stroke-width="1.3"><circle cx="434.0" cy="531.5" r="1.8" fill="#111"/><path d="M429.0 539.5 Q430.0 532.5 434.0 533.5 Q437.0 535.5 438.0 539.5"/><circle cx="435.0" cy="537.5" r="2.3"/><path d="M429.0 539.5 H438.0"/></g>
<circle cx="442.0" cy="534.6" r="4.5" fill="none" stroke="#111" stroke-width="1.7"/><circle cx="442.0" cy="534.6" r="1.3" fill="#111"/>
<text x="441.0" y="548.4" font-size="9.5" fill="#111" font-weight="bold" text-anchor="middle" stroke="#111" stroke-width="0.3">2:55</text>
<g fill="none" stroke="#111" stroke-width="1.3"><circle cx="524.0" cy="522.0" r="1.8" fill="#111"/><path d="M519.0 530.0 Q520.0 523.0 524.0 524.0 Q527.0 526.0 528.0 530.0"/><circle cx="525.0" cy="528.0" r="2.3"/><path d="M519.0 530.0 H528.0"/></g>
<path d="M518.5 529.0 V539.5 M518.5 535.5 H527.5 V539.5" fill="none" stroke="#111" stroke-width="1.9"/>
<text x="523.0" y="548.4" font-size="9.5" fill="#10283a" font-weight="bold" text-anchor="middle" stroke="#10283a" stroke-width="0.3">1:19</text>
<g fill="none" stroke="#111" stroke-width="1.3"><circle cx="566.0" cy="531.5" r="1.8" fill="#111"/><path d="M561.0 539.5 Q562.0 532.5 566.0 533.5 Q569.0 535.5 570.0 539.5"/><circle cx="567.0" cy="537.5" r="2.3"/><path d="M561.0 539.5 H570.0"/></g>
<circle cx="574.0" cy="534.6" r="4.5" fill="none" stroke="#111" stroke-width="1.7"/><circle cx="574.0" cy="534.6" r="1.3" fill="#111"/>
<text x="571.0" y="548.4" font-size="9.5" fill="#111" font-weight="bold" text-anchor="middle" stroke="#111" stroke-width="0.3">1:12</text>
<circle cx="606.0" cy="534.6" r="4.5" fill="none" stroke="#111" stroke-width="1.7"/><circle cx="606.0" cy="534.6" r="1.3" fill="#111"/>
<circle cx="691.0" cy="534.6" r="4.5" fill="none" stroke="#111" stroke-width="1.7"/><circle cx="691.0" cy="534.6" r="1.3" fill="#111"/>
<text x="691.0" y="548.4" font-size="9.5" fill="#111" font-weight="bold" text-anchor="middle" stroke="#111" stroke-width="0.3">3:09</text>
<path d="M770.5 530.0 V540.0 M770.5 535.5 H779.5 V540.0" fill="none" stroke="#111" stroke-width="2"/>
<text x="775.0" y="548.4" font-size="9.5" fill="#10283a" font-weight="bold" text-anchor="middle" stroke="#10283a" stroke-width="0.3">1:10</text>
<circle cx="855.0" cy="534.6" r="4.5" fill="none" stroke="#111" stroke-width="1.7"/><circle cx="855.0" cy="534.6" r="1.3" fill="#111"/>
<text x="855.0" y="548.4" font-size="9.5" fill="#111" font-weight="bold" text-anchor="middle" stroke="#111" stroke-width="0.3">3:00</text>
<circle cx="948.0" cy="534.6" r="4.5" fill="none" stroke="#111" stroke-width="1.7"/><circle cx="948.0" cy="534.6" r="1.3" fill="#111"/>
<text x="948.0" y="548.4" font-size="9.5" fill="#111" font-weight="bold" text-anchor="middle" stroke="#111" stroke-width="0.3">1:26</text>
<path d="M992.5 530.0 V540.0 M992.5 535.5 H1001.5 V540.0" fill="none" stroke="#111" stroke-width="2"/>
<text x="37.0" y="526.5" font-size="10" fill="#111" textLength="34.0" lengthAdjust="spacingAndGlyphs" >niedziela</text>
<text x="37.0" y="544.2" font-size="9.4" fill="#111" textLength="46.0" lengthAdjust="spacingAndGlyphs" >22-08-2021</text>
<rect x="91.0" y="610.7" width="925.5" height="4.3" fill="#3ea84a" />
<rect x="91.0" y="615.0" width="925.5" height="7.0" fill="#c6f1f5" />
<rect x="91.0" y="615.0" width="231.0" height="3.5" fill="#c47ad8" />
<rect x="322.0" y="615.0" width="156.0" height="3.5" fill="#c4c4c4" />
<rect x="91.0" y="626.0" width="231.0" height="1.2" fill="#cc44dd" />
<line x1="91.0" y1="620.6" x2="91.0" y2="627.5" stroke="#333" stroke-width="1.1" />
<text x="88.1" y="635.8" font-size="9.6" fill="#222" >0</text>
<line x1="129.6" y1="620.6" x2="129.6" y2="627.5" stroke="#333" stroke-width="1.1" />
<text x="126.7" y="635.8" font-size="9.6" fill="#222" >1</text>
<line x1="168.1" y1="620.6" x2="168.1" y2="627.5" stroke="#333" stroke-width="1.1" />
<text x="165.2" y="635.8" font-size="9.6" fill="#222" >2</text>
<line x1="206.6" y1="620.6" x2="206.6" y2="627.5" stroke="#333" stroke-width="1.1" />
<text x="203.7" y="635.8" font-size="9.6" fill="#222" >3</text>
<line x1="245.2" y1="620.6" x2="245.2" y2="627.5" stroke="#333" stroke-width="1.1" />
<text x="242.3" y="635.8" font-size="9.6" fill="#222" >4</text>
<line x1="283.8" y1="620.6" x2="283.8" y2="627.5" stroke="#333" stroke-width="1.1" />
<text x="280.9" y="635.8" font-size="9.6" fill="#222" >5</text>
<line x1="322.3" y1="620.6" x2="322.3" y2="627.5" stroke="#333" stroke-width="1.1" />
<text x="319.4" y="635.8" font-size="9.6" fill="#222" >6</text>
<line x1="360.8" y1="620.6" x2="360.8" y2="627.5" stroke="#333" stroke-width="1.1" />
<text x="357.9" y="635.8" font-size="9.6" fill="#222" >7</text>
<line x1="399.4" y1="620.6" x2="399.4" y2="627.5" stroke="#333" stroke-width="1.1" />
<text x="396.5" y="635.8" font-size="9.6" fill="#222" >8</text>
<line x1="437.9" y1="620.6" x2="437.9" y2="627.5" stroke="#333" stroke-width="1.1" />
<text x="435.1" y="635.8" font-size="9.6" fill="#222" >9</text>
<line x1="476.5" y1="620.6" x2="476.5" y2="627.5" stroke="#333" stroke-width="1.1" />
<text x="473.6" y="635.8" font-size="9.6" fill="#222" >10</text>
<line x1="515.0" y1="620.6" x2="515.0" y2="627.5" stroke="#333" stroke-width="1.1" />
<text x="512.1" y="635.8" font-size="9.6" fill="#222" >11</text>
<line x1="553.6" y1="620.6" x2="553.6" y2="627.5" stroke="#333" stroke-width="1.1" />
<text x="550.7" y="635.8" font-size="9.6" fill="#222" >12</text>
<line x1="592.1" y1="620.6" x2="592.1" y2="627.5" stroke="#333" stroke-width="1.1" />
<text x="589.2" y="635.8" font-size="9.6" fill="#222" >13</text>
<line x1="630.7" y1="620.6" x2="630.7" y2="627.5" stroke="#333" stroke-width="1.1" />
<text x="627.8" y="635.8" font-size="9.6" fill="#222" >14</text>
<line x1="669.2" y1="620.6" x2="669.2" y2="627.5" stroke="#333" stroke-width="1.1" />
<text x="666.4" y="635.8" font-size="9.6" fill="#222" >15</text>
<line x1="707.8" y1="620.6" x2="707.8" y2="627.5" stroke="#333" stroke-width="1.1" />
<text x="704.9" y="635.8" font-size="9.6" fill="#222" >16</text>
<line x1="746.3" y1="620.6" x2="746.3" y2="627.5" stroke="#333" stroke-width="1.1" />
<text x="743.4" y="635.8" font-size="9.6" fill="#222" >17</text>
<line x1="784.9" y1="620.6" x2="784.9" y2="627.5" stroke="#333" stroke-width="1.1" />
<text x="782.0" y="635.8" font-size="9.6" fill="#222" >18</text>
<line x1="823.4" y1="620.6" x2="823.4" y2="627.5" stroke="#333" stroke-width="1.1" />
<text x="820.5" y="635.8" font-size="9.6" fill="#222" >19</text>
<line x1="862.0" y1="620.6" x2="862.0" y2="627.5" stroke="#333" stroke-width="1.1" />
<text x="859.1" y="635.8" font-size="9.6" fill="#222" >20</text>
<line x1="900.5" y1="620.6" x2="900.5" y2="627.5" stroke="#333" stroke-width="1.1" />
<text x="897.6" y="635.8" font-size="9.6" fill="#222" >21</text>
<line x1="939.1" y1="620.6" x2="939.1" y2="627.5" stroke="#333" stroke-width="1.1" />
<text x="936.2" y="635.8" font-size="9.6" fill="#222" >22</text>
<line x1="977.6" y1="620.6" x2="977.6" y2="627.5" stroke="#333" stroke-width="1.1" />
<text x="974.8" y="635.8" font-size="9.6" fill="#222" >23</text>
<line x1="322.0" y1="573.0" x2="322.0" y2="613.0" stroke="#66dd66" stroke-width="1.2" />
<line x1="265.6" y1="579.0" x2="265.6" y2="623.0" stroke="#1f5f2f" stroke-width="3" />
<path d="M521.8 627 V589" stroke="#111" stroke-width="1.3"/><path d="M518.5 591 l3.3 -4.5 l3.3 4.5z" fill="#111"/>
<text x="298.0" y="579.5" font-size="9.2" fill="#222" textLength="23.0" lengthAdjust="spacingAndGlyphs" >06:01</text>
<path d="M200.5 600.0 V610.0 M200.5 605.5 H209.5 V610.0" fill="none" stroke="#111" stroke-width="2"/>
<text x="205.0" y="618.4" font-size="10" fill="#9a1a2a" font-weight="bold" text-anchor="middle" textLength="48.0" lengthAdjust="spacingAndGlyphs" stroke="#9a1a2a" stroke-width="0.3">6:58 (5x9)</text>
<path d="M395.5 600.0 V610.0 M395.5 605.5 H404.5 V610.0" fill="none" stroke="#111" stroke-width="2"/>
<text x="400.0" y="618.4" font-size="9.5" fill="#1a3a2a" font-weight="bold" text-anchor="middle" stroke="#1a3a2a" stroke-width="0.3">4:02</text>
<path d="M740.5 600.0 V610.0 M740.5 605.5 H749.5 V610.0" fill="none" stroke="#111" stroke-width="2"/>
<text x="745.0" y="618.4" font-size="9.5" fill="#111" font-weight="bold" text-anchor="middle" stroke="#111" stroke-width="0.3">30:31</text>
<g transform="translate(768.0,594.0) rotate(-60)"><path d="M-7 0 l3 -2.3 h9 a1.5 1.5 0 0 1 0 4.6 h-9z" fill="#111"/><rect x="-2.5" y="-0.8" width="6" height="1.6" fill="#ccc"/></g>
<text x="37.0" y="596.5" font-size="10" fill="#111" textLength="50.0" lengthAdjust="spacingAndGlyphs" >poniedziałek</text>
<text x="37.0" y="614.2" font-size="9.4" fill="#111" textLength="46.0" lengthAdjust="spacingAndGlyphs" >23-08-2021</text>
<rect x="9.5" y="218.3" width="17.0" height="23.0" fill="#e6e6e6" stroke="#aaa" stroke-width="1"/>
<line x1="14.0" y1="221.8" x2="22.0" y2="221.8" stroke="#111" stroke-width="1.6" />
<line x1="18.0" y1="221.8" x2="18.0" y2="225.8" stroke="#111" stroke-width="1.4" />
<path d="M14 237.3 L18 225.8 L22 237.3z" fill="#111"/>
<rect x="9.5" y="254.1" width="17.0" height="31.6" fill="#e6e6e6" stroke="#aaa" stroke-width="1"/>
<path d="M13.5 265.3 L18 256.6 L22.5 265.3z" fill="#111"/>
<path d="M13.5 274.0 L18 265.3 L22.5 274.0z" fill="#111"/>
<path d="M13.5 282.7 L18 274.0 L22.5 282.7z" fill="#111"/>
<rect x="9.5" y="298.5" width="17.0" height="20.5" fill="#e6e6e6" stroke="#aaa" stroke-width="1"/>
<path d="M13.5 308.5 L18 301.0 L22.5 308.5z" fill="#111"/>
<path d="M13.5 316.0 L18 308.5 L22.5 316.0z" fill="#111"/>
<rect x="9.5" y="331.1" width="17.0" height="16.9" fill="#e6e6e6" stroke="#aaa" stroke-width="1"/>
<path d="M13.5 345.0 L18 333.6 L22.5 345.0z" fill="#111"/>
<rect x="9.5" y="384.5" width="17.0" height="16.3" fill="#e6e6e6" stroke="#aaa" stroke-width="1"/>
<path d="M13.5 387.0 L18 397.8 L22.5 387.0z" fill="#111"/>
<rect x="9.5" y="413.0" width="17.0" height="22.8" fill="#e6e6e6" stroke="#aaa" stroke-width="1"/>
<path d="M13.5 415.5 L18 424.15 L22.5 415.5z" fill="#111"/>
<path d="M13.5 424.15 L18 432.79999999999995 L22.5 424.15z" fill="#111"/>
<rect x="9.5" y="448.0" width="17.0" height="32.6" fill="#e6e6e6" stroke="#aaa" stroke-width="1"/>
<path d="M13.5 450.5 L18 459.53333333333336 L22.5 450.5z" fill="#111"/>
<path d="M13.5 459.53333333333336 L18 468.5666666666667 L22.5 459.53333333333336z" fill="#111"/>
<path d="M13.5 468.56666666666666 L18 477.6 L22.5 468.56666666666666z" fill="#111"/>
<rect x="9.5" y="492.5" width="17.0" height="25.0" fill="#e6e6e6" stroke="#aaa" stroke-width="1"/>
<line x1="14.0" y1="513.5" x2="22.0" y2="513.5" stroke="#111" stroke-width="1.6" />
<path d="M14 496 L18 509.5 L22 496z" fill="#111"/>
</svg>
</body></html>
